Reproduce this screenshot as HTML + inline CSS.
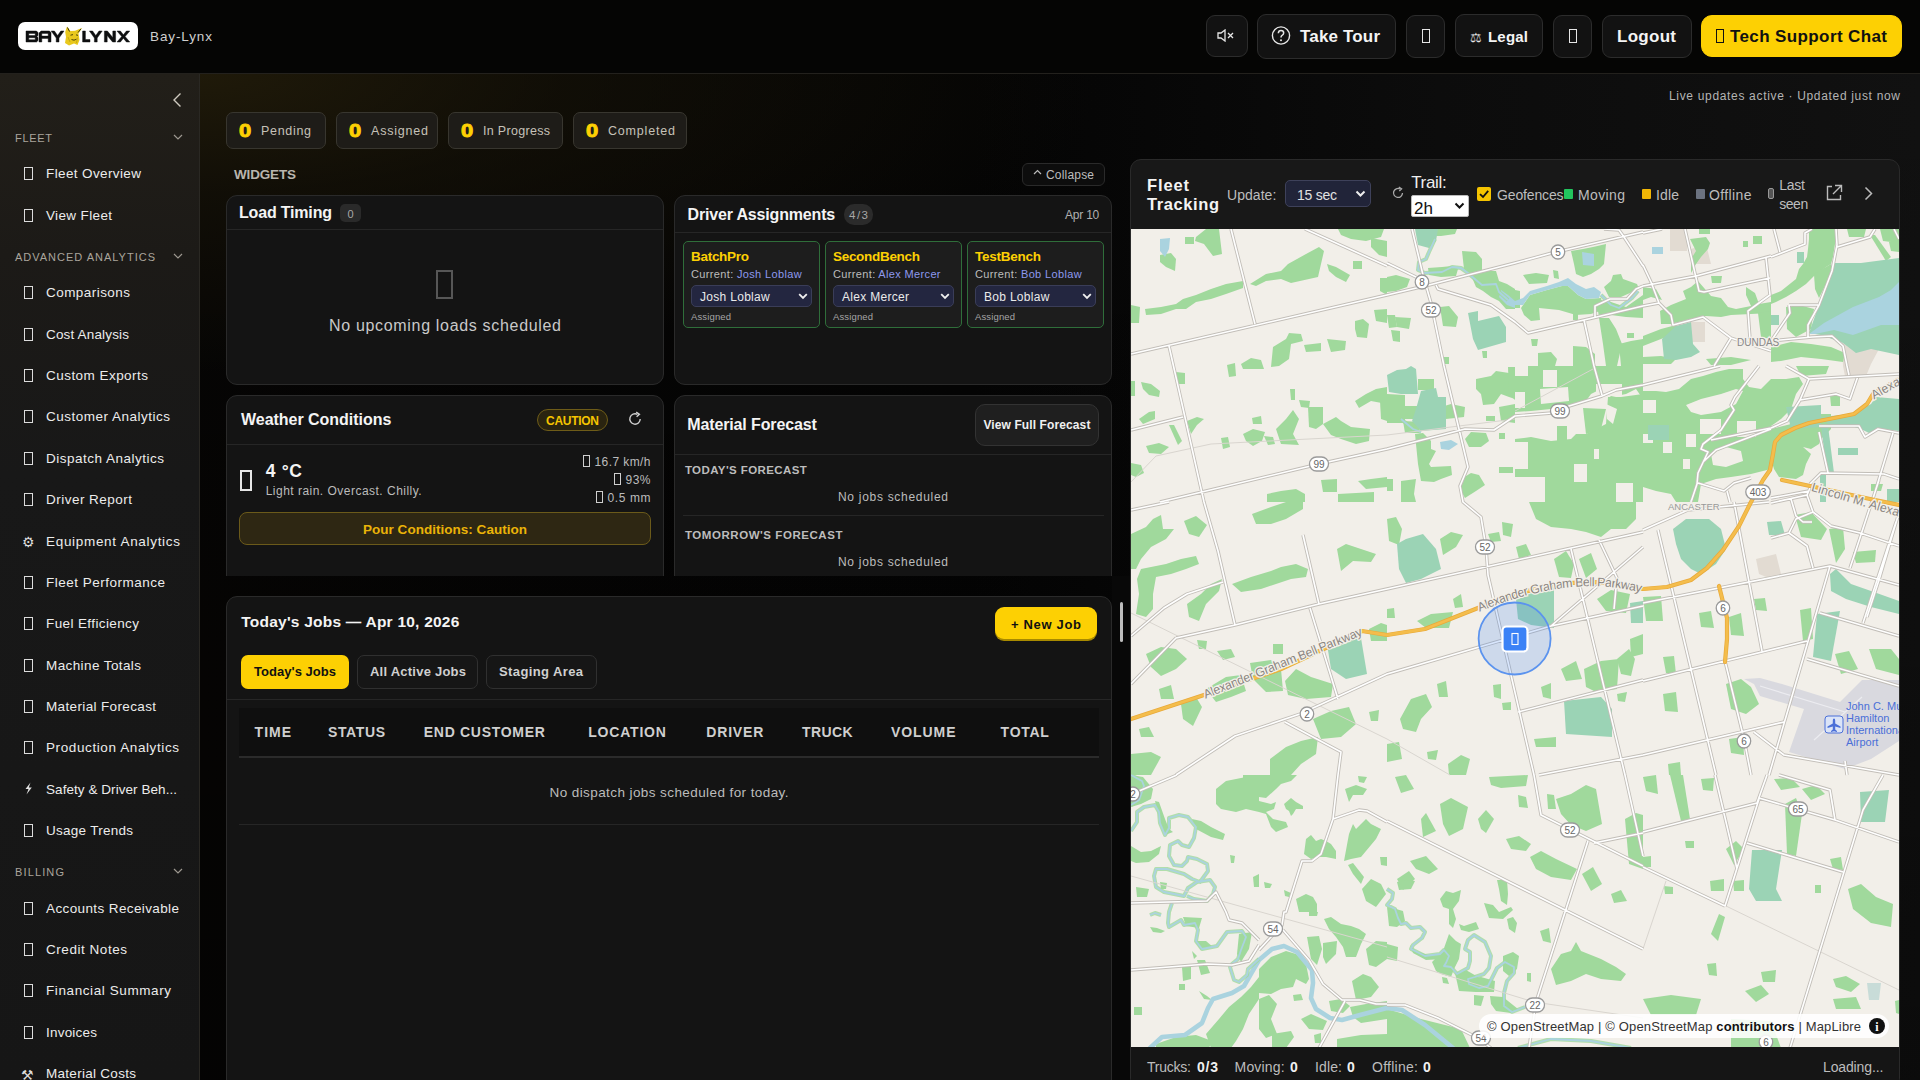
<!DOCTYPE html>
<html><head><meta charset="utf-8"><style>*{box-sizing:border-box;margin:0;padding:0}
html,body{width:1920px;height:1080px;overflow:hidden;background:#0b0b0b;font-family:"Liberation Sans",sans-serif}
.t{position:absolute;white-space:nowrap;line-height:1}
.b{position:absolute}
</style></head><body>
<div class="b" style="left:0px;top:0px;width:1920px;height:73px;background:#050504"></div>
<div class="b" style="left:0px;top:73px;width:1920px;height:1px;background:#23211d"></div>
<div class="b" style="left:18px;top:22px;width:120px;height:28px;background:#fff;border-radius:7px"></div>
<svg class="b" style="left:18px;top:22px" width="120" height="28" viewBox="0 0 120 28">
<g fill="#0e0f10" stroke="#0e0f10" stroke-width="0.45">
<path d="M8 9 H18.5 L20 10.5 V13.6 L18.8 14.6 L20 15.6 V18.6 L18.5 20 H8 Z M10.8 11.4 V13.5 H17.2 V11.4 Z M10.8 15.7 V17.7 H17.2 V15.7 Z" fill-rule="evenodd"/>
<path d="M23 9 H31.5 L33 10.5 V20 H30.2 V16.4 H23.8 V20 H21 V11 Z M23.8 11.4 V14.1 H30.2 V11.4 Z" fill-rule="evenodd"/>
<path d="M33.2 9 H36.4 L39.6 13.6 L42.8 9 H46 L41 16 V20 H38.2 V16 Z"/>
<path d="M64.6 9 H67.4 V17.6 H72 V20 H64.6 Z"/>
<path d="M71.4 9 H74.6 L77.8 13.6 L81 9 H84.2 L79.2 16 V20 H76.4 V16 Z"/>
<path d="M86.4 9 H89.4 L94.8 15.6 V9 H97.6 V20 H94.6 L89.2 13.4 V20 H86.4 Z"/>
<path d="M99 9 H102.4 L105.4 12.8 L108.4 9 H111.8 L107.1 14.5 L111.8 20 H108.4 L105.4 16.2 L102.4 20 H99 L103.7 14.5 Z"/>
</g>
<path d="M49 4.5 L52.5 9 L57 8.8 L64 6 L60.5 11.5 L61.5 18 L59.5 23 L56 21.5 L51 23.5 L47 21 L48 15 L47.2 10 Z" fill="#e9c81c"/>
<path d="M49.5 5.5 L51.5 9.5 M63 6.8 L60 10.5" stroke="#2a2a10" stroke-width="0.9"/>
<path d="M52.5 13.2 L55 12.6 M58 12.8 L60 13.4 M53.5 17.5 Q56 19 58.5 17.2" stroke="#3a3508" stroke-width="0.9" fill="none"/>
<path d="M50 15 L52 20 M59.5 15.5 L58.5 21" stroke="#b89c10" stroke-width="0.7" fill="none"/>
</svg>
<div class="t" style="left:150.00px;top:30.47px;font-size:13.5px;color:#cfcfcf;letter-spacing:0.889px;">Bay-Lynx</div>
<div class="b" style="left:1206px;top:15px;width:42px;height:42px;background:#121212;border:1px solid #2c2c2c;border-radius:9px"></div>
<svg class="b" style="left:1217px;top:29px" width="18" height="13" viewBox="0 0 18 13"><path d="M1 4 H4 L8 1 V12 L4 9 H1 Z" fill="none" stroke="#e6e6e6" stroke-width="1.3"/><path d="M11 4 L16 9 M16 4 L11 9" stroke="#e6e6e6" stroke-width="1.3"/></svg>
<div class="b" style="left:1257px;top:14px;width:139px;height:45px;background:#121212;border:1px solid #2c2c2c;border-radius:9px"></div>
<svg class="b" style="left:1271px;top:26px" width="20" height="20" viewBox="0 0 20 20"><circle cx="10" cy="9.5" r="8.6" fill="none" stroke="#e6e6e6" stroke-width="1.4"/><path d="M7.3 7.3 Q7.5 4.6 10 4.6 Q12.7 4.6 12.7 7.1 Q12.7 8.7 10.8 9.6 Q10 10.1 10 11.6" fill="none" stroke="#e6e6e6" stroke-width="1.5"/><circle cx="10" cy="14.2" r="1" fill="#e6e6e6"/></svg>
<div class="t" style="left:1300.00px;top:27.51px;font-size:17px;color:#f4f4f4;font-weight:bold;letter-spacing:0.160px;">Take Tour</div>
<div class="b" style="left:1406px;top:15px;width:39px;height:43px;background:#121212;border:1px solid #2c2c2c;border-radius:9px"></div>
<div class="b" style="left:1422px;top:29px;width:8px;height:14px;border:1.5px solid #e6e6e6"></div>
<div class="b" style="left:1455px;top:14px;width:88px;height:43px;background:#121212;border:1px solid #2c2c2c;border-radius:9px"></div>
<div class="t" style="left:1470.00px;top:30.90px;font-size:13px;color:#e6e6e6;">&#9878;</div>
<div class="t" style="left:1488.00px;top:29.20px;font-size:15px;color:#f4f4f4;font-weight:bold;letter-spacing:0.205px;">Legal</div>
<div class="b" style="left:1553px;top:15px;width:39px;height:43px;background:#121212;border:1px solid #2c2c2c;border-radius:9px"></div>
<div class="b" style="left:1569px;top:29px;width:8px;height:14px;border:1.5px solid #e6e6e6"></div>
<div class="b" style="left:1602px;top:15px;width:90px;height:43px;background:#121212;border:1px solid #2c2c2c;border-radius:9px"></div>
<div class="t" style="left:1617.00px;top:27.51px;font-size:17px;color:#f4f4f4;font-weight:bold;letter-spacing:0.283px;">Logout</div>
<div class="b" style="left:1701px;top:15px;width:201px;height:42px;background:#fdd003;border:1px solid #fdd003;border-radius:11px"></div>
<div class="b" style="left:1716px;top:29px;width:8px;height:14px;border:1.5px solid #111"></div>
<div class="t" style="left:1730.00px;top:27.51px;font-size:17px;color:#111;font-weight:bold;letter-spacing:0.388px;">Tech Support Chat</div>
<div class="b" style="left:0;top:74px;width:199px;height:1006px;background:linear-gradient(180deg,#221f19 0px,#1c1a17 180px,#181818 400px,#161616 1006px)"></div>
<div class="b" style="left:199px;top:74px;width:1px;height:1006px;background:#2a2823"></div>
<svg class="b" style="left:172px;top:92px" width="10" height="16" viewBox="0 0 10 16"><path d="M8.5 1.5 L2 8 L8.5 14.5" fill="none" stroke="#cfcac0" stroke-width="1.4"/></svg>
<div class="t" style="left:15.00px;top:133.09px;font-size:11px;color:#aaa59c;letter-spacing:0.692px;">FLEET</div>
<svg class="b" style="left:173px;top:134px" width="10" height="6" viewBox="0 0 10 6"><path d="M1 1 L5 5 L9 1" fill="none" stroke="#9d9890" stroke-width="1.2"/></svg>
<div class="b" style="left:24px;top:167px;width:9px;height:13px;border:1.4px solid #dcdcdc"></div>
<div class="t" style="left:46.00px;top:167.27px;font-size:13.5px;color:#ececec;letter-spacing:0.383px;">Fleet Overview</div>
<div class="b" style="left:24px;top:209px;width:9px;height:13px;border:1.4px solid #dcdcdc"></div>
<div class="t" style="left:46.00px;top:209.27px;font-size:13.5px;color:#ececec;letter-spacing:0.358px;">View Fleet</div>
<div class="t" style="left:15.00px;top:252.09px;font-size:11px;color:#aaa59c;letter-spacing:0.996px;">ADVANCED ANALYTICS</div>
<svg class="b" style="left:173px;top:253px" width="10" height="6" viewBox="0 0 10 6"><path d="M1 1 L5 5 L9 1" fill="none" stroke="#9d9890" stroke-width="1.2"/></svg>
<div class="b" style="left:24px;top:286px;width:9px;height:13px;border:1.4px solid #dcdcdc"></div>
<div class="t" style="left:46.00px;top:286.27px;font-size:13.5px;color:#ececec;letter-spacing:0.447px;">Comparisons</div>
<div class="b" style="left:24px;top:328px;width:9px;height:13px;border:1.4px solid #dcdcdc"></div>
<div class="t" style="left:46.00px;top:328.27px;font-size:13.5px;color:#ececec;letter-spacing:0.164px;">Cost Analysis</div>
<div class="b" style="left:24px;top:369px;width:9px;height:13px;border:1.4px solid #dcdcdc"></div>
<div class="t" style="left:46.00px;top:369.27px;font-size:13.5px;color:#ececec;letter-spacing:0.459px;">Custom Exports</div>
<div class="b" style="left:24px;top:410px;width:9px;height:13px;border:1.4px solid #dcdcdc"></div>
<div class="t" style="left:46.00px;top:410.27px;font-size:13.5px;color:#ececec;letter-spacing:0.497px;">Customer Analytics</div>
<div class="b" style="left:24px;top:452px;width:9px;height:13px;border:1.4px solid #dcdcdc"></div>
<div class="t" style="left:46.00px;top:452.27px;font-size:13.5px;color:#ececec;letter-spacing:0.497px;">Dispatch Analytics</div>
<div class="b" style="left:24px;top:493px;width:9px;height:13px;border:1.4px solid #dcdcdc"></div>
<div class="t" style="left:46.00px;top:493.27px;font-size:13.5px;color:#ececec;letter-spacing:0.477px;">Driver Report</div>
<div class="t" style="left:22.00px;top:535.05px;font-size:14px;color:#ddd;">&#9881;</div>
<div class="t" style="left:46.00px;top:535.27px;font-size:13.5px;color:#ececec;letter-spacing:0.691px;">Equipment Analytics</div>
<div class="b" style="left:24px;top:576px;width:9px;height:13px;border:1.4px solid #dcdcdc"></div>
<div class="t" style="left:46.00px;top:576.27px;font-size:13.5px;color:#ececec;letter-spacing:0.497px;">Fleet Performance</div>
<div class="b" style="left:24px;top:617px;width:9px;height:13px;border:1.4px solid #dcdcdc"></div>
<div class="t" style="left:46.00px;top:617.27px;font-size:13.5px;color:#ececec;letter-spacing:0.390px;">Fuel Efficiency</div>
<div class="b" style="left:24px;top:659px;width:9px;height:13px;border:1.4px solid #dcdcdc"></div>
<div class="t" style="left:46.00px;top:659.27px;font-size:13.5px;color:#ececec;letter-spacing:0.400px;">Machine Totals</div>
<div class="b" style="left:24px;top:700px;width:9px;height:13px;border:1.4px solid #dcdcdc"></div>
<div class="t" style="left:46.00px;top:700.27px;font-size:13.5px;color:#ececec;letter-spacing:0.357px;">Material Forecast</div>
<div class="b" style="left:24px;top:741px;width:9px;height:13px;border:1.4px solid #dcdcdc"></div>
<div class="t" style="left:46.00px;top:741.27px;font-size:13.5px;color:#ececec;letter-spacing:0.602px;">Production Analytics</div>
<svg class="b" style="left:24px;top:782px" width="9" height="13" viewBox="0 0 9 13"><path d="M6.5 0.5 L1.5 7 H4.5 L2.5 12.5 L7.8 5.5 H4.8 Z" fill="#e0e0e0"/></svg>
<div class="t" style="left:46.00px;top:783.27px;font-size:13.5px;color:#ececec;letter-spacing:0.057px;">Safety &amp; Driver Beh...</div>
<div class="b" style="left:24px;top:824px;width:9px;height:13px;border:1.4px solid #dcdcdc"></div>
<div class="t" style="left:46.00px;top:824.27px;font-size:13.5px;color:#ececec;letter-spacing:0.268px;">Usage Trends</div>
<div class="t" style="left:15.00px;top:867.09px;font-size:11px;color:#aaa59c;letter-spacing:1.136px;">BILLING</div>
<svg class="b" style="left:173px;top:868px" width="10" height="6" viewBox="0 0 10 6"><path d="M1 1 L5 5 L9 1" fill="none" stroke="#9d9890" stroke-width="1.2"/></svg>
<div class="b" style="left:24px;top:902px;width:9px;height:13px;border:1.4px solid #dcdcdc"></div>
<div class="t" style="left:46.00px;top:902.27px;font-size:13.5px;color:#ececec;letter-spacing:0.385px;">Accounts Receivable</div>
<div class="b" style="left:24px;top:943px;width:9px;height:13px;border:1.4px solid #dcdcdc"></div>
<div class="t" style="left:46.00px;top:943.27px;font-size:13.5px;color:#ececec;letter-spacing:0.543px;">Credit Notes</div>
<div class="b" style="left:24px;top:984px;width:9px;height:13px;border:1.4px solid #dcdcdc"></div>
<div class="t" style="left:46.00px;top:984.27px;font-size:13.5px;color:#ececec;letter-spacing:0.591px;">Financial Summary</div>
<div class="b" style="left:24px;top:1026px;width:9px;height:13px;border:1.4px solid #dcdcdc"></div>
<div class="t" style="left:46.00px;top:1026.27px;font-size:13.5px;color:#ececec;letter-spacing:0.211px;">Invoices</div>
<div class="t" style="left:21.00px;top:1068.05px;font-size:14px;color:#ddd;">&#9874;</div>
<div class="t" style="left:46.00px;top:1067.27px;font-size:13.5px;color:#ececec;letter-spacing:0.286px;">Material Costs</div>
<div class="b" style="left:200px;top:74px;width:1720px;height:1006px;background:radial-gradient(ellipse 900px 300px at 0px 0px,rgba(34,28,10,0.9) 0%,rgba(24,20,8,0.6) 40%,rgba(0,0,0,0) 100%),linear-gradient(180deg,rgba(0,0,0,0) 0%,rgba(0,0,0,0.35) 100%),linear-gradient(90deg,#060504 0%,#040404 45%,#0c0c0c 72%,#111111 100%)"></div>
<div class="t" style="left:1669.00px;top:89.74px;font-size:12px;color:#b4b4b4;letter-spacing:0.672px;">Live updates active · Updated just now</div>
<div class="b" style="left:226px;top:112px;width:100px;height:37px;background:#1e1c18;border:1px solid #38362f;border-radius:7px"></div>
<div class="t" style="left:239.00px;top:121.66px;font-size:18px;color:#fdd003;font-weight:bold;-webkit-text-stroke:0.9px #fdd003;transform:scaleX(1.22);transform-origin:0 0;">0</div>
<div class="t" style="left:261.00px;top:124.82px;font-size:12.5px;color:#c6c2b8;letter-spacing:0.687px;">Pending</div>
<div class="b" style="left:336px;top:112px;width:102px;height:37px;background:#1e1c18;border:1px solid #38362f;border-radius:7px"></div>
<div class="t" style="left:349.00px;top:121.66px;font-size:18px;color:#fdd003;font-weight:bold;-webkit-text-stroke:0.9px #fdd003;transform:scaleX(1.22);transform-origin:0 0;">0</div>
<div class="t" style="left:371.00px;top:124.82px;font-size:12.5px;color:#c6c2b8;letter-spacing:0.797px;">Assigned</div>
<div class="b" style="left:448px;top:112px;width:115px;height:37px;background:#1e1c18;border:1px solid #38362f;border-radius:7px"></div>
<div class="t" style="left:461.00px;top:121.66px;font-size:18px;color:#fdd003;font-weight:bold;-webkit-text-stroke:0.9px #fdd003;transform:scaleX(1.22);transform-origin:0 0;">0</div>
<div class="t" style="left:483.00px;top:124.82px;font-size:12.5px;color:#c6c2b8;letter-spacing:0.308px;">In Progress</div>
<div class="b" style="left:573px;top:112px;width:114px;height:37px;background:#1e1c18;border:1px solid #38362f;border-radius:7px"></div>
<div class="t" style="left:586.00px;top:121.66px;font-size:18px;color:#fdd003;font-weight:bold;-webkit-text-stroke:0.9px #fdd003;transform:scaleX(1.22);transform-origin:0 0;">0</div>
<div class="t" style="left:608.00px;top:124.82px;font-size:12.5px;color:#c6c2b8;letter-spacing:0.819px;">Completed</div>
<div class="t" style="left:234.00px;top:168.17px;font-size:13.5px;color:#b9b5ad;font-weight:bold;letter-spacing:-0.166px;">WIDGETS</div>
<div class="b" style="left:1022px;top:163px;width:83px;height:23px;background:#0d0d0d;border:1px solid #2a2a2a;border-radius:6px"></div>
<svg class="b" style="left:1033px;top:169px" width="9" height="6" viewBox="0 0 9 6"><path d="M1 5 L4.5 1.5 L8 5" fill="none" stroke="#bbb" stroke-width="1.2"/></svg>
<div class="t" style="left:1046.00px;top:169.24px;font-size:12px;color:#bdbdbd;letter-spacing:0.186px;">Collapse</div>
<div class="b" style="left:226px;top:195px;width:438px;height:190px;background:#141414;border:1px solid #2a2a2a;border-radius:11px;"></div>
<div class="b" style="left:227px;top:229px;width:436px;height:1px;background:#262626"></div>
<div class="t" style="left:239.00px;top:205.26px;font-size:16px;color:#f4f4f4;font-weight:bold;letter-spacing:-0.181px;">Load Timing</div>
<div class="b" style="left:340px;top:204px;width:21px;height:18px;background:#2a2a2a;border-radius:5px"></div>
<div class="t" style="left:347.44px;top:208.59px;font-size:11px;color:#a8a8a8;">0</div>
<div class="b" style="left:436px;top:270px;width:17px;height:29px;border:2px solid #575757"></div>
<div class="t" style="left:329.00px;top:317.56px;font-size:16px;color:#c9c9c9;letter-spacing:0.678px;">No upcoming loads scheduled</div>
<div class="b" style="left:674px;top:195px;width:438px;height:190px;background:#141414;border:1px solid #2a2a2a;border-radius:11px;"></div>
<div class="b" style="left:675px;top:232px;width:436px;height:1px;background:#262626"></div>
<div class="t" style="left:687.60px;top:207.06px;font-size:16px;color:#f4f4f4;font-weight:bold;letter-spacing:-0.175px;">Driver Assignments</div>
<div class="b" style="left:844px;top:204px;width:29px;height:21px;background:#2b2b2b;border-radius:10px"></div>
<div class="t" style="left:849.00px;top:210.17px;font-size:11.5px;color:#a8a8a8;letter-spacing:1.507px;">4/3</div>
<div class="t" style="left:1064.90px;top:209.14px;font-size:12px;color:#b0b0b0;letter-spacing:-0.191px;">Apr 10</div>
<div class="b" style="left:683px;top:241px;width:137px;height:87px;background:#1d1d1d;border:1px solid #2f6e3a;border-radius:5px"></div>
<div class="t" style="left:691.00px;top:249.57px;font-size:13.5px;color:#fdd003;font-weight:bold;letter-spacing:-0.288px;">BatchPro</div>
<div class="t" style="left:691px;top:269.09px;font-size:11px;color:#bcbcbc;letter-spacing:0.35px">Current: <span style="color:#8d99ee">Josh Loblaw</span></div>
<div class="b" style="left:691px;top:285px;width:121px;height:22px;background:#232640;border:1px solid #3a3d58;border-radius:5px"></div>
<div class="t" style="left:700.00px;top:291.24px;font-size:12px;color:#eaeaea;letter-spacing:0.3px;">Josh Loblaw</div>
<svg class="b" style="left:798px;top:293px" width="10" height="7" viewBox="0 0 10 7"><path d="M1.2 1.2 L5 5 L8.8 1.2" fill="none" stroke="#f0f0f0" stroke-width="1.8"/></svg>
<div class="t" style="left:691.00px;top:312.06px;font-size:9.5px;color:#a6a6a6;letter-spacing:0.131px;">Assigned</div>
<div class="b" style="left:825px;top:241px;width:137px;height:87px;background:#1d1d1d;border:1px solid #2f6e3a;border-radius:5px"></div>
<div class="t" style="left:833.00px;top:249.57px;font-size:13.5px;color:#fdd003;font-weight:bold;letter-spacing:-0.302px;">SecondBench</div>
<div class="t" style="left:833px;top:269.09px;font-size:11px;color:#bcbcbc;letter-spacing:0.35px">Current: <span style="color:#8d99ee">Alex Mercer</span></div>
<div class="b" style="left:833px;top:285px;width:121px;height:22px;background:#232640;border:1px solid #3a3d58;border-radius:5px"></div>
<div class="t" style="left:842.00px;top:291.24px;font-size:12px;color:#eaeaea;letter-spacing:0.3px;">Alex Mercer</div>
<svg class="b" style="left:940px;top:293px" width="10" height="7" viewBox="0 0 10 7"><path d="M1.2 1.2 L5 5 L8.8 1.2" fill="none" stroke="#f0f0f0" stroke-width="1.8"/></svg>
<div class="t" style="left:833.00px;top:312.06px;font-size:9.5px;color:#a6a6a6;letter-spacing:0.131px;">Assigned</div>
<div class="b" style="left:967px;top:241px;width:137px;height:87px;background:#1d1d1d;border:1px solid #2f6e3a;border-radius:5px"></div>
<div class="t" style="left:975.00px;top:249.57px;font-size:13.5px;color:#fdd003;font-weight:bold;letter-spacing:-0.252px;">TestBench</div>
<div class="t" style="left:975px;top:269.09px;font-size:11px;color:#bcbcbc;letter-spacing:0.35px">Current: <span style="color:#8d99ee">Bob Loblaw</span></div>
<div class="b" style="left:975px;top:285px;width:121px;height:22px;background:#232640;border:1px solid #3a3d58;border-radius:5px"></div>
<div class="t" style="left:984.00px;top:291.24px;font-size:12px;color:#eaeaea;letter-spacing:0.3px;">Bob Loblaw</div>
<svg class="b" style="left:1082px;top:293px" width="10" height="7" viewBox="0 0 10 7"><path d="M1.2 1.2 L5 5 L8.8 1.2" fill="none" stroke="#f0f0f0" stroke-width="1.8"/></svg>
<div class="t" style="left:975.00px;top:312.06px;font-size:9.5px;color:#a6a6a6;letter-spacing:0.131px;">Assigned</div>
<div class="b" style="left:200px;top:380px;width:920px;height:196px;overflow:hidden">
<div class="b" style="left:26px;top:15px;width:438px;height:245px;background:#141414;border:1px solid #2a2a2a;border-radius:11px"></div>
<div class="b" style="left:474px;top:15px;width:438px;height:245px;background:#141414;border:1px solid #2a2a2a;border-radius:11px"></div>
</div>
<div class="b" style="left:227px;top:444px;width:436px;height:1px;background:#262626"></div>
<div class="t" style="left:241.00px;top:411.86px;font-size:16px;color:#f4f4f4;font-weight:bold;letter-spacing:-0.025px;">Weather Conditions</div>
<div class="b" style="left:537px;top:409px;width:71px;height:22px;background:#2a2410;border:1px solid #6e5c18;border-radius:11px"></div>
<div class="t" style="left:546.00px;top:415.24px;font-size:12px;color:#f5c400;font-weight:bold;letter-spacing:-0.277px;">CAUTION</div>
<svg class="b" style="left:627px;top:411px" width="16" height="16" viewBox="0 0 16 16"><path d="M13.2 8 A5.2 5.2 0 1 1 10.4 3.4" fill="none" stroke="#cfcfcf" stroke-width="1.4"/><path d="M9.2 1.2 L12.4 3.3 L9.6 5.8" fill="none" stroke="#cfcfcf" stroke-width="1.4"/></svg>
<div class="b" style="left:240px;top:470px;width:12px;height:21px;border:2px solid #e6e6e6"></div>
<div class="t" style="left:265.70px;top:462.79px;font-size:17.5px;color:#f4f4f4;font-weight:bold;letter-spacing:0.689px;">4 °C</div>
<div class="t" style="left:265.70px;top:485.04px;font-size:12px;color:#bcbcbc;letter-spacing:0.482px;">Light rain. Overcast. Chilly.</div>
<div class="t" style="left:594.50px;top:455.74px;font-size:12px;color:#bcbcbc;letter-spacing:0.413px;">16.7 km/h</div>
<div class="b" style="left:582.5px;top:454.5px;width:7px;height:12px;border:1.2px solid #cfcfcf"></div>
<div class="t" style="left:625.50px;top:473.74px;font-size:12px;color:#bcbcbc;letter-spacing:0.491px;">93%</div>
<div class="b" style="left:613.5px;top:472.5px;width:7px;height:12px;border:1.2px solid #cfcfcf"></div>
<div class="t" style="left:607.50px;top:492.04px;font-size:12px;color:#bcbcbc;letter-spacing:0.598px;">0.5 mm</div>
<div class="b" style="left:595.5px;top:490.8px;width:7px;height:12px;border:1.2px solid #cfcfcf"></div>
<div class="b" style="left:239px;top:512px;width:412px;height:33px;background:#2e2713;border:1px solid #6b5a1a;border-radius:8px"></div>
<div class="t" style="left:363.00px;top:522.97px;font-size:13.5px;color:#eab308;font-weight:bold;letter-spacing:0.023px;">Pour Conditions: Caution</div>
<div class="b" style="left:675px;top:454px;width:436px;height:1px;background:#262626"></div>
<div class="t" style="left:687.20px;top:417.06px;font-size:16px;color:#f4f4f4;font-weight:bold;letter-spacing:-0.120px;">Material Forecast</div>
<div class="b" style="left:975px;top:404px;width:124px;height:42px;background:#1f1f1f;border:1px solid #333;border-radius:10px"></div>
<div class="t" style="left:983.40px;top:419.04px;font-size:12px;color:#f0f0f0;font-weight:bold;letter-spacing:0.109px;">View Full Forecast</div>
<div class="t" style="left:684.90px;top:465.47px;font-size:11.5px;color:#bdbdbd;font-weight:bold;letter-spacing:0.411px;">TODAY&#x27;S FORECAST</div>
<div class="t" style="left:838.00px;top:491.44px;font-size:12px;color:#bcbcbc;letter-spacing:0.704px;">No jobs scheduled</div>
<div class="b" style="left:683px;top:515px;width:421px;height:1px;background:#262626"></div>
<div class="t" style="left:684.90px;top:530.47px;font-size:11.5px;color:#bdbdbd;font-weight:bold;letter-spacing:0.558px;">TOMORROW&#x27;S FORECAST</div>
<div class="t" style="left:838.00px;top:556.34px;font-size:12px;color:#bcbcbc;letter-spacing:0.704px;">No jobs scheduled</div>
<div class="b" style="left:1112px;top:576px;width:19px;height:504px;background:#080808"></div>
<div class="b" style="left:1120px;top:602px;width:2.5px;height:40px;background:#bdbdbd;border-radius:2px"></div>
<div class="b" style="left:226px;top:596px;width:886px;height:504px;background:#141414;border:1px solid #2a2a2a;border-radius:11px;"></div>
<div class="t" style="left:241.30px;top:614.48px;font-size:15.5px;color:#f4f4f4;font-weight:bold;letter-spacing:0.225px;">Today&#x27;s Jobs — Apr 10, 2026</div>
<div class="b" style="left:995px;top:607px;width:102px;height:32px;background:#fdd003;border-radius:9px;box-shadow:0 2px 0 #a88a00"></div>
<div class="t" style="left:1011.00px;top:617.90px;font-size:13px;color:#111;font-weight:bold;letter-spacing:0.668px;">+ New Job</div>
<div class="b" style="left:241px;top:655px;width:108px;height:34px;background:#fdd003;border-radius:7px"></div>
<div class="t" style="left:254.00px;top:664.50px;font-size:13px;color:#111;font-weight:bold;letter-spacing:0.037px;">Today&#x27;s Jobs</div>
<div class="b" style="left:357px;top:655px;width:121px;height:34px;background:#161616;border:1px solid #303030;border-radius:7px"></div>
<div class="t" style="left:370.00px;top:664.50px;font-size:13px;color:#d0d0d0;font-weight:bold;letter-spacing:0.235px;">All Active Jobs</div>
<div class="b" style="left:486px;top:655px;width:111px;height:34px;background:#161616;border:1px solid #303030;border-radius:7px"></div>
<div class="t" style="left:499.00px;top:664.50px;font-size:13px;color:#d0d0d0;font-weight:bold;letter-spacing:0.391px;">Staging Area</div>
<div class="b" style="left:227px;top:699px;width:884px;height:1px;background:#262626"></div>
<div class="b" style="left:239px;top:708px;width:860px;height:48px;background:#0f0f0f"></div>
<div class="b" style="left:239px;top:756px;width:860px;height:2px;background:#2b2b2b"></div>
<div class="t" style="left:254.60px;top:725.05px;font-size:14px;color:#cfcfcf;font-weight:bold;letter-spacing:1.019px;">TIME</div>
<div class="t" style="left:328.00px;top:725.05px;font-size:14px;color:#cfcfcf;font-weight:bold;letter-spacing:0.615px;">STATUS</div>
<div class="t" style="left:423.80px;top:725.05px;font-size:14px;color:#cfcfcf;font-weight:bold;letter-spacing:0.699px;">END CUSTOMER</div>
<div class="t" style="left:588.20px;top:725.05px;font-size:14px;color:#cfcfcf;font-weight:bold;letter-spacing:0.805px;">LOCATION</div>
<div class="t" style="left:706.30px;top:725.05px;font-size:14px;color:#cfcfcf;font-weight:bold;letter-spacing:0.820px;">DRIVER</div>
<div class="t" style="left:802.00px;top:725.05px;font-size:14px;color:#cfcfcf;font-weight:bold;letter-spacing:0.426px;">TRUCK</div>
<div class="t" style="left:891.00px;top:725.05px;font-size:14px;color:#cfcfcf;font-weight:bold;letter-spacing:0.922px;">VOLUME</div>
<div class="t" style="left:1000.60px;top:725.05px;font-size:14px;color:#cfcfcf;font-weight:bold;letter-spacing:0.734px;">TOTAL</div>
<div class="t" style="left:549.50px;top:785.67px;font-size:13.5px;color:#bcbcbc;letter-spacing:0.413px;">No dispatch jobs scheduled for today.</div>
<div class="b" style="left:239px;top:824px;width:860px;height:1px;background:#262626"></div>
<div class="b" style="left:1130px;top:159px;width:770px;height:930px;background:#181818;border:1px solid #2a2a2a;border-radius:11px;overflow:hidden"></div>
<div class="t" style="left:1147.00px;top:176.93px;font-size:16.5px;color:#f4f4f4;font-weight:bold;letter-spacing:0.872px;">Fleet</div>
<div class="t" style="left:1147.00px;top:195.93px;font-size:16.5px;color:#f4f4f4;font-weight:bold;letter-spacing:0.591px;">Tracking</div>
<div class="t" style="left:1227.00px;top:187.55px;font-size:14px;color:#bdbdbd;letter-spacing:0.044px;">Update:</div>
<div class="b" style="left:1285px;top:180px;width:86px;height:27px;background:#212439;border:1px solid #3e415a;border-radius:5px"></div>
<div class="t" style="left:1297.00px;top:187.55px;font-size:14px;color:#e2e2e2;letter-spacing:-0.250px;">15 sec</div>
<svg class="b" style="left:1355px;top:190px" width="11" height="8" viewBox="0 0 11 8"><path d="M1.5 1.5 L5.5 5.5 L9.5 1.5" fill="none" stroke="#eee" stroke-width="2"/></svg>
<svg class="b" style="left:1391px;top:186px" width="14" height="14" viewBox="0 0 14 14"><path d="M11.5 7 A4.5 4.5 0 1 1 9 2.9" fill="none" stroke="#aaa" stroke-width="1.3"/><path d="M7.8 1 L10.6 2.9 L8.3 5" fill="none" stroke="#aaa" stroke-width="1.3"/></svg>
<div class="t" style="left:1411.20px;top:174.21px;font-size:17px;color:#efefef;letter-spacing:-0.330px;">Trail:</div>
<div class="b" style="left:1411px;top:195px;width:58px;height:22px;background:#fff;border:1px solid #bbb;border-radius:2px"></div>
<div class="t" style="left:1414.00px;top:200.01px;font-size:17px;color:#111;">2h</div>
<svg class="b" style="left:1454px;top:202px" width="11" height="8" viewBox="0 0 11 8"><path d="M1.5 1.5 L5.5 5.5 L9.5 1.5" fill="none" stroke="#111" stroke-width="2"/></svg>
<div class="b" style="left:1477px;top:187px;width:14px;height:14px;background:#f5c400;border-radius:2px"></div>
<svg class="b" style="left:1477px;top:187px" width="14" height="14" viewBox="0 0 14 14"><path d="M3 7.2 L6 10 L11.2 3.8" fill="none" stroke="#111" stroke-width="1.8"/></svg>
<div class="t" style="left:1497.00px;top:187.55px;font-size:14px;color:#bdbdbd;letter-spacing:-0.139px;">Geofences</div>
<div class="b" style="left:1564px;top:189px;width:9px;height:10px;background:#22c55e;border-radius:1px"></div>
<div class="t" style="left:1578.00px;top:187.55px;font-size:14px;color:#bdbdbd;letter-spacing:0.373px;">Moving</div>
<div class="b" style="left:1642px;top:189px;width:9px;height:10px;background:#f2b705;border-radius:1px"></div>
<div class="t" style="left:1656.00px;top:187.55px;font-size:14px;color:#bdbdbd;letter-spacing:0.142px;">Idle</div>
<div class="b" style="left:1696px;top:189px;width:9px;height:10px;background:#6b7280;border-radius:1px"></div>
<div class="t" style="left:1709.00px;top:187.55px;font-size:14px;color:#bdbdbd;letter-spacing:0.382px;">Offline</div>
<div class="b" style="left:1768px;top:188px;width:6px;height:11px;border:1.2px solid #999;border-radius:2px;background:#555"></div>
<div class="t" style="left:1779.20px;top:177.85px;font-size:14px;color:#bdbdbd;letter-spacing:-0.221px;">Last</div>
<div class="t" style="left:1779.20px;top:197.05px;font-size:14px;color:#bdbdbd;letter-spacing:-0.453px;">seen</div>
<svg class="b" style="left:1825px;top:184px" width="18" height="18" viewBox="0 0 18 18"><path d="M7 2.5 H2.5 V15.5 H15.5 V11" fill="none" stroke="#bbb" stroke-width="1.4"/><path d="M10 1.5 H16.5 V8 M16.5 1.5 L8 10" fill="none" stroke="#bbb" stroke-width="1.4"/></svg>
<svg class="b" style="left:1864px;top:186px" width="9" height="15" viewBox="0 0 9 15"><path d="M1.5 1.5 L7.5 7.5 L1.5 13.5" fill="none" stroke="#bbb" stroke-width="1.5"/></svg>
<div class="b" style="left:1131px;top:229px;width:768px;height:818px;overflow:hidden;background:#f2efe9"><svg width="768" height="818" viewBox="0 0 768 818" style="position:absolute;left:0;top:0">
<rect width="768" height="818" fill="#f2efe9"/>
<polygon points="711,114 730,112 748,99 755,105 748,120 740,135 735,147 714,147 712,137" fill="#e2dbd2"/>
<polygon points="539,0 556,0 556,22 539,22" fill="#e2dbd2"/>
<polygon points="560,93 574,93 574,113 560,113" fill="#e2dbd2"/>
<polygon points="625,330 645,325 650,345 640,350 628,345" fill="#e2dbd2"/>
<polygon points="560,35 580,35 575,15 560,20" fill="#e2dbd2"/>
<polygon points="613,450 629,449 651,455 709,473 731,451 768,451 768,512 740,530 714,540 658,523 673,480 629,467 623,455" fill="#d9d9df"/>
<path d="M629,457 L714,483 M683,511 L731,468" stroke="#ececf0" stroke-width="1.2"/>
<polygon points="65,8 75,0 88,0 91,25 82,27 73,15 64,12" fill="#a0d99c"/>
<polygon points="54,8 63,8 63,15 54,15" fill="#a0d99c"/>
<polygon points="29,26 40,24 45,30 44,42 35,38 29,33" fill="#a0d99c"/>
<polygon points="119,55 135,45 150,42 157,35 175,25 188,18 193,22 190,35 187,48 160,54 150,50 135,52 125,57" fill="#a0d99c"/>
<polygon points="14,80 30,78 45,75 52,70 65,66 80,60 95,55 112,52 112,59 95,65 80,70 65,73 55,80 45,80 30,85 15,86" fill="#a0d99c"/>
<polygon points="0,76 9,78 8,94 0,94" fill="#a0d99c"/>
<polygon points="196,35 205,38 219,46 215,53 205,48 198,42" fill="#a0d99c"/>
<polygon points="222,32 231,32 231,40 222,40" fill="#a0d99c"/>
<polygon points="240,9 256,12 256,28 248,26 240,18" fill="#a0d99c"/>
<polygon points="207,0 253,0 250,8 235,12 220,10 210,6" fill="#a0d99c"/>
<polygon points="249,49 256,49 256,66 249,62" fill="#a0d99c"/>
<polygon points="243,81 256,80 256,94 245,92" fill="#a0d99c"/>
<polygon points="224,92 232,90 238,95 236,109 226,108 224,100" fill="#a0d99c"/>
<polygon points="140,138 142,118 155,110 158,104 170,105 172,112 160,115 158,130 148,137" fill="#a0d99c"/>
<polygon points="173,116 190,114 190,122 175,123" fill="#a0d99c"/>
<polygon points="196,110 215,112 214,121 200,123" fill="#a0d99c"/>
<polygon points="110,135 120,129 130,131 133,140 112,140" fill="#a0d99c"/>
<polygon points="96,136 104,134 105,147 98,148" fill="#a0d99c"/>
<polygon points="45,143 54,144 54,155 47,155" fill="#a0d99c"/>
<polygon points="10,153 20,155 29,162 28,168 18,166 12,160" fill="#a0d99c"/>
<polygon points="0,152 4,152 4,167 0,167" fill="#a0d99c"/>
<polygon points="8,190 18,183 24,182 24,190 12,195" fill="#a0d99c"/>
<polygon points="56,192 66,188 73,190 66,196 60,205" fill="#a0d99c"/>
<polygon points="38,196 43,196 51,212 47,216" fill="#a0d99c"/>
<polygon points="15,217 28,214 38,218 30,225 18,224" fill="#a0d99c"/>
<polygon points="0,234 10,236 13,244 5,248 0,246" fill="#a0d99c"/>
<polygon points="90,209 97,208 99,218 92,220" fill="#a0d99c"/>
<polygon points="112,205 122,200 134,203 131,212 122,217 115,212" fill="#a0d99c"/>
<polygon points="133,207 142,208 144,215 137,216" fill="#a0d99c"/>
<polygon points="145,200 155,190 162,181 168,190 162,205 168,216 150,215" fill="#a0d99c"/>
<polygon points="168,171 179,172 178,179 170,178" fill="#a0d99c"/>
<polygon points="177,178 192,178 192,195 185,200 178,198" fill="#a0d99c"/>
<polygon points="192,195 205,188 210,192 220,198 239,200 238,212 225,215 210,210 200,206" fill="#a0d99c"/>
<polygon points="224,172 235,165 245,160 256,158 256,175 240,172 228,179" fill="#a0d99c"/>
<polygon points="249,172 256,172 256,192 250,190" fill="#a0d99c"/>
<polygon points="190,251 206,250 206,263 192,263" fill="#a0d99c"/>
<polygon points="227,252 240,250 256,248 256,258 235,260" fill="#a0d99c"/>
<polygon points="207,265 225,264 243,263 243,273 207,273" fill="#a0d99c"/>
<polygon points="136,265 150,262 165,260 174,265 174,273 136,273" fill="#a0d99c"/>
<polygon points="159,160 164,160 164,171 160,171" fill="#a0d99c"/>
<polygon points="121,189 130,187 131,195 122,195" fill="#a0d99c"/>
<polygon points="297,0 326,0 324,5 310,7 297,7" fill="#a0d99c"/>
<polygon points="297,39 311,38 321,37 327,40 325,47 310,48 298,46" fill="#a0d99c"/>
<polygon points="331,22 345,23 351,30 351,48 340,46 333,40" fill="#a0d99c"/>
<polygon points="340,46 352,42 365,42 368,52 376,55 384,60 384,80 375,80 368,72 360,68 352,62 345,58" fill="#a0d99c"/>
<polygon points="256,48 265,46 279,50 276,58 265,62 256,63" fill="#a0d99c"/>
<polygon points="309,78 318,77 327,88 325,98 312,97" fill="#a0d99c"/>
<polygon points="256,86 264,86 266,98 258,99" fill="#a0d99c"/>
<polygon points="264,88 280,89 278,100 266,98" fill="#a0d99c"/>
<polygon points="260,101 269,102 269,113 262,112" fill="#a0d99c"/>
<polygon points="351,122 356,122 356,129 352,129" fill="#a0d99c"/>
<polygon points="313,128 318,128 318,135 313,135" fill="#a0d99c"/>
<polygon points="390,79 399,66 416,61 431,57 437,57 447,66 455,70 470,69 472,81 460,85 445,86 428,81 408,79 409,91 400,92 393,86" fill="#a0d99c"/>
<polygon points="440,22 452,20 462,18 475,15 473,35 468,40 460,45 452,48 445,45 443,35" fill="#a0d99c"/>
<polygon points="392,46 405,44 418,46 416,54 398,55" fill="#a0d99c"/>
<polygon points="422,41 427,42 428,50 423,49" fill="#a0d99c"/>
<polygon points="384,61 389,62 389,79 384,79" fill="#a0d99c"/>
<polygon points="473,58 480,52 482,46 490,45 492,50 506,55 508,60 490,68 478,68" fill="#a0d99c"/>
<polygon points="465,70 480,73 495,78 512,66 512,89 495,88 480,86 468,88" fill="#a0d99c"/>
<polygon points="468,89 478,89 485,100 491,115 486,137 475,137 472,115" fill="#a0d99c"/>
<polygon points="442,84 447,84 447,91 442,91" fill="#a0d99c"/>
<polygon points="400,110 407,110 406,117 401,117" fill="#a0d99c"/>
<polygon points="407,124 420,123 426,130 424,137 407,137" fill="#a0d99c"/>
<polygon points="442,117 455,118 464,125 464,137 442,137" fill="#a0d99c"/>
<polygon points="488,115 500,112 512,110 512,137 490,137" fill="#a0d99c"/>
<polygon points="496,104 503,104 503,109 496,109" fill="#a0d99c"/>
<polygon points="287,150 303,150 303,161 287,161" fill="#a0d99c"/>
<polygon points="256,165 274,166 274,194 256,194" fill="#a0d99c"/>
<polygon points="272,177 287,177 287,190 272,190" fill="#a0d99c"/>
<polygon points="272,192 290,193 288,204 274,204" fill="#a0d99c"/>
<polygon points="310,178 320,175 334,178 333,188 315,190" fill="#a0d99c"/>
<polygon points="345,150 360,147 365,142 378,144 384,148 384,170 378,168 370,165 363,175 352,176 350,165 345,160" fill="#a0d99c"/>
<polygon points="377,138 384,138 384,171 378,165" fill="#a0d99c"/>
<polygon points="368,178 384,175 384,194 370,192" fill="#a0d99c"/>
<polygon points="355,187 364,187 364,192 355,192" fill="#a0d99c"/>
<polygon points="334,210 340,203 355,204 358,212 350,218 338,218" fill="#a0d99c"/>
<polygon points="284,205 292,204 300,212 300,220 305,222 298,235 300,238 320,237 321,246 310,250 303,253 290,252 287,235 285,215" fill="#a0d99c"/>
<polygon points="330,250 340,244 348,246 354,256 345,262 334,269 330,262" fill="#a0d99c"/>
<polygon points="368,238 382,238 382,244 368,244" fill="#a0d99c"/>
<polygon points="368,204 374,204 374,210 368,210" fill="#a0d99c"/>
<polygon points="256,250 262,250 262,262 256,262" fill="#a0d99c"/>
<polygon points="270,252 285,250 283,265 285,273 270,273" fill="#a0d99c"/>
<polygon points="384,137 512,137 512,170 505,160 495,165 480,168 470,160 460,165 455,172 440,178 420,180 400,182 384,183" fill="#a0d99c"/>
<polygon points="384,210 400,208 420,212 440,210 445,205 455,205 465,200 475,195 477,168 490,168 512,165 512,273 384,273" fill="#a0d99c"/>
<polygon points="426,197 436,197 436,215 426,215" fill="#a0d99c"/>
<polygon points="452,179 475,180 470,200 455,205" fill="#a0d99c"/>
<polygon points="559,10 575,8 579,14 577,20 570,28 565,35 560,44 560,30 565,22" fill="#a0d99c"/>
<polygon points="568,0 579,0 579,5 568,5" fill="#a0d99c"/>
<polygon points="612,12 617,12 617,18 612,18" fill="#a0d99c"/>
<polygon points="622,7 631,7 631,15 622,15" fill="#a0d99c"/>
<polygon points="580,47 591,47 590,54 581,54" fill="#a0d99c"/>
<polygon points="529,82 540,76 555,70 552,62 560,58 567,52 580,67 590,69 597,78 605,80 620,77 615,66 615,58 624,64 628,75 640,73 640,84 620,85 600,86 590,88 575,87 560,90 548,93 540,95 530,95" fill="#a0d99c"/>
<polygon points="512,107 530,100 545,96 545,104 530,110 512,117" fill="#a0d99c"/>
<polygon points="512,58 525,60 531,71 520,68 512,71" fill="#a0d99c"/>
<polygon points="627,84 640,82 640,110 630,108" fill="#a0d99c"/>
<polygon points="512,128 530,127 545,130 540,135 512,135" fill="#a0d99c"/>
<polygon points="575,130 600,128 620,131 600,136 580,136" fill="#a0d99c"/>
<polygon points="640,66 650,62 655,58 665,50 668,40 672,35 676,28 677,20 678,10 678,0 705,0 704,15 702,28 700,35 695,38 690,42 683,47 675,55 665,62 655,68 645,73 640,75" fill="#a0d99c"/>
<polygon points="683,45 700,35 700,45 695,55 690,65 688,69 684,60" fill="#a0d99c"/>
<polygon points="739,6 744,6 760,28 755,32" fill="#a0d99c"/>
<polygon points="716,0 735,0 733,8 718,8" fill="#a0d99c"/>
<polygon points="749,0 768,0 768,14 752,12" fill="#a0d99c"/>
<polygon points="758,13 768,11 768,23 760,22" fill="#a0d99c"/>
<polygon points="640,118 660,113 680,115 700,118 714,124 712,133 690,130 670,128 650,132 640,133" fill="#a0d99c"/>
<polygon points="655,78 668,76 683,80 680,100 665,108 656,100" fill="#a0d99c"/>
<polygon points="512,162 525,162 535,163 548,160 560,150 572,147 585,143 598,140 612,140 625,137 640,137 640,240 620,245 600,248 585,250 570,255 567,273 545,273 540,265 525,262 512,258" fill="#a0d99c"/>
<polygon points="640,150 655,150 668,148 672,155 665,165 660,180 650,190 640,197" fill="#a0d99c"/>
<polygon points="665,137 698,137 695,145 670,147" fill="#a0d99c"/>
<polygon points="640,200 660,195 680,190 690,185 700,185 700,200 690,210 688,215 680,220 672,218 680,225 675,235 672,246 665,250 648,248 643,240 640,230" fill="#a0d99c"/>
<polygon points="699,166 709,166 709,177 700,177" fill="#a0d99c"/>
<polygon points="740,255 752,255 750,262 740,262" fill="#a0d99c"/>
<polygon points="0,305 15,298 22,290 30,286 32,300 43,300 35,310 20,318 10,330 5,340 0,340" fill="#a0d99c"/>
<polygon points="10,340 20,338 35,335 50,330 65,327 68,335 55,340 40,345 25,348 22,365 22,380 15,388 5,385 8,365 6,350" fill="#a0d99c"/>
<polygon points="53,292 65,287 76,296 68,308 58,305" fill="#a0d99c"/>
<polygon points="101,355 120,348 140,342 150,338 165,335 177,340 175,348 160,350 145,355 130,360 110,363" fill="#a0d99c"/>
<polygon points="121,285 140,278 155,273 172,273 172,280 155,290 140,295 125,295" fill="#a0d99c"/>
<polygon points="56,375 70,365 80,355 91,350 88,362 75,375 68,392 58,388" fill="#a0d99c"/>
<polygon points="206,320 215,315 245,325 240,333 222,332 210,342" fill="#a0d99c"/>
<polygon points="15,425 30,418 45,420 56,430 45,440 30,447 20,438" fill="#a0d99c"/>
<polygon points="66,411 76,412 75,420 68,420" fill="#a0d99c"/>
<polygon points="86,422 100,420 104,428 92,431" fill="#a0d99c"/>
<polygon points="28,460 40,456 43,470 30,470" fill="#a0d99c"/>
<polygon points="119,434 140,431 150,440 152,462 135,463 122,450" fill="#a0d99c"/>
<polygon points="75,460 95,448 110,446 115,462 100,468 85,473" fill="#a0d99c"/>
<polygon points="154,452 165,440 180,448 202,455 200,468 175,470 157,466" fill="#a0d99c"/>
<polygon points="142,415 152,415 152,425 142,425" fill="#a0d99c"/>
<polygon points="50,475 65,468 71,478 62,497 52,490" fill="#a0d99c"/>
<polygon points="8,500 18,498 23,508 10,508" fill="#a0d99c"/>
<polygon points="0,525 20,523 30,528 20,546 0,546" fill="#a0d99c"/>
<polygon points="139,530 155,518 170,512 187,508 185,525 170,535 160,546 139,546" fill="#a0d99c"/>
<polygon points="182,490 200,482 218,478 225,495 210,508 190,510" fill="#a0d99c"/>
<polygon points="238,483 248,481 247,492 240,492" fill="#a0d99c"/>
<polygon points="238,400 250,394 256,396 256,412 240,412" fill="#a0d99c"/>
<polygon points="398,273 505,273 505,290 495,300 480,300 470,308 455,303 440,300 420,298 405,290" fill="#a0d99c"/>
<polygon points="256,290 265,288 271,300 268,316 258,312" fill="#a0d99c"/>
<polygon points="309,310 320,303 332,306 325,318 312,326" fill="#a0d99c"/>
<polygon points="371,293 382,295 380,308 372,306" fill="#a0d99c"/>
<polygon points="357,305 368,303 370,312 360,313" fill="#a0d99c"/>
<polygon points="385,318 395,315 400,326 388,330" fill="#a0d99c"/>
<polygon points="423,330 435,322 443,335 440,349 428,348" fill="#a0d99c"/>
<polygon points="448,330 460,324 466,340 455,349" fill="#a0d99c"/>
<polygon points="466,370 480,361 499,365 495,384 475,382" fill="#a0d99c"/>
<polygon points="286,392 300,385 322,383 318,399 295,399" fill="#a0d99c"/>
<polygon points="322,370 330,365 332,378 324,379" fill="#a0d99c"/>
<polygon points="256,380 263,379 264,389 256,389" fill="#a0d99c"/>
<polygon points="430,440 445,432 451,450 435,452" fill="#a0d99c"/>
<polygon points="453,440 470,432 488,430 486,460 465,463 455,458" fill="#a0d99c"/>
<polygon points="486,430 498,420 504,430 500,447 490,445" fill="#a0d99c"/>
<polygon points="269,490 280,470 295,465 301,478 290,490 285,503 272,500" fill="#a0d99c"/>
<polygon points="306,455 315,452 317,468 308,468" fill="#a0d99c"/>
<polygon points="362,456 370,455 370,470 363,468" fill="#a0d99c"/>
<polygon points="371,474 380,473 380,481 372,481" fill="#a0d99c"/>
<polygon points="410,458 420,454 420,470 412,468" fill="#a0d99c"/>
<polygon points="403,510 425,508 425,518 405,518" fill="#a0d99c"/>
<polygon points="317,535 330,526 339,530 335,546 318,546" fill="#a0d99c"/>
<polygon points="256,515 268,513 271,530 256,533" fill="#a0d99c"/>
<polygon points="296,523 307,521 305,531 297,530" fill="#a0d99c"/>
<polygon points="486,465 496,463 494,473 487,472" fill="#a0d99c"/>
<polygon points="499,410 512,405 512,425 500,428" fill="#a0d99c"/>
<polygon points="512,368 530,367 532,392 515,392" fill="#a0d99c"/>
<polygon points="568,384 580,382 583,399 570,398" fill="#a0d99c"/>
<polygon points="598,388 610,384 613,407 600,406" fill="#a0d99c"/>
<polygon points="623,370 634,369 636,382 625,381" fill="#a0d99c"/>
<polygon points="595,455 610,450 620,458 628,475 615,485 600,480" fill="#a0d99c"/>
<polygon points="532,465 545,463 547,483 534,482" fill="#a0d99c"/>
<polygon points="532,428 543,427 545,445 535,444" fill="#a0d99c"/>
<polygon points="598,510 612,508 613,526 600,524" fill="#a0d99c"/>
<polygon points="537,535 549,533 550,546 538,546" fill="#a0d99c"/>
<polygon points="664,286 680,283 696,300 690,311 670,308" fill="#a0d99c"/>
<polygon points="698,300 712,298 714,320 705,334" fill="#a0d99c"/>
<polygon points="669,381 680,379 682,410 672,412" fill="#a0d99c"/>
<polygon points="704,425 718,422 727,440 710,445" fill="#a0d99c"/>
<polygon points="722,323 745,321 744,333 725,334" fill="#a0d99c"/>
<polygon points="738,420 760,420 768,430 768,446 745,440" fill="#a0d99c"/>
<polygon points="85,560 95,552 105,550 115,548 128,546 128,583 115,580 105,583 90,580 85,575" fill="#a0d99c"/>
<polygon points="112,546 128,546 128,552 112,552" fill="#a0d99c"/>
<polygon points="24,572 28,573 34,590 38,600 42,603 34,606 29,594" fill="#a0d99c"/>
<polygon points="61,590 70,592 80,598 94,605 92,611 80,608 65,600" fill="#a0d99c"/>
<polygon points="0,617 10,623 20,622 30,617 28,625 18,633 5,634 0,632" fill="#a0d99c"/>
<polygon points="5,658 18,660 16,668 6,668" fill="#a0d99c"/>
<polygon points="29,653 36,654 35,660 30,660" fill="#a0d99c"/>
<polygon points="99,626 104,627 103,634 100,634" fill="#a0d99c"/>
<polygon points="122,648 128,645 128,658 123,658" fill="#a0d99c"/>
<polygon points="0,546 12,548 22,560 20,570 10,575 0,578" fill="#a0d99c"/>
<polygon points="128,546 166,546 160,552 150,555 145,560 135,569 128,568" fill="#a0d99c"/>
<polygon points="128,572 140,575 145,573 143,580 135,583 142,590 155,593 157,598 145,603 140,598 135,585 128,583" fill="#a0d99c"/>
<polygon points="153,575 160,569 165,573 172,577 172,580 165,580 162,585 160,587 158,582 155,580" fill="#a0d99c"/>
<polygon points="214,560 225,556 236,560 232,566 222,566 218,573" fill="#a0d99c"/>
<polygon points="227,547 236,548 233,554 228,553" fill="#a0d99c"/>
<polygon points="173,625 175,610 180,606 185,612 190,610 195,612 200,615 205,622 205,630 195,628 188,628 180,630" fill="#a0d99c"/>
<polygon points="213,632 218,605 222,595 225,600 230,595 235,590 240,595 250,600 245,610 235,622 230,628 220,630" fill="#a0d99c"/>
<polygon points="249,628 256,628 256,637 250,636" fill="#a0d99c"/>
<polygon points="217,636 222,634 233,648 230,655 222,645" fill="#a0d99c"/>
<polygon points="231,660 240,650 250,655 255,665 245,678 235,672" fill="#a0d99c"/>
<polygon points="133,653 141,655 139,659 134,659" fill="#a0d99c"/>
<polygon points="153,661 160,664 158,668 154,667" fill="#a0d99c"/>
<polygon points="165,670 175,665 182,668 186,675 186,683 168,683" fill="#a0d99c"/>
<polygon points="52,688 71,689 68,699 55,697" fill="#a0d99c"/>
<polygon points="64,712 75,712 82,718 70,721" fill="#a0d99c"/>
<polygon points="108,705 121,703 118,720 110,733 106,725" fill="#a0d99c"/>
<polygon points="19,698 26,699 34,702 30,704 22,703" fill="#a0d99c"/>
<polygon points="61,722 66,727 63,730" fill="#a0d99c"/>
<polygon points="66,731 74,731 79,744 70,746" fill="#a0d99c"/>
<polygon points="51,738 60,738 60,750 52,752" fill="#a0d99c"/>
<polygon points="48,755 54,755 54,761 48,761" fill="#a0d99c"/>
<polygon points="3,778 11,778 11,786 3,786" fill="#a0d99c"/>
<polygon points="68,762 76,767 81,771 73,770" fill="#a0d99c"/>
<polygon points="75,805 88,790 98,778 110,768 120,758 128,748 128,770 118,785 112,800 105,812 100,819 80,819" fill="#a0d99c"/>
<polygon points="25,815 45,808 65,806 81,812 78,819 25,819" fill="#a0d99c"/>
<polygon points="128,740 140,728 155,722 165,725 175,735 178,750 175,755 165,750 162,758 150,760 140,765 128,764" fill="#a0d99c"/>
<polygon points="128,770 138,766 146,775 140,790 146,805 135,809 128,800" fill="#a0d99c"/>
<polygon points="141,805 160,802 163,808 155,819 141,819" fill="#a0d99c"/>
<polygon points="176,708 188,707 191,720 186,736 180,730" fill="#a0d99c"/>
<polygon points="192,714 206,712 205,725 195,735 192,728" fill="#a0d99c"/>
<polygon points="193,690 200,688 210,695 220,697 228,700 235,705 230,715 225,728 215,728 212,718 205,708 198,700" fill="#a0d99c"/>
<polygon points="235,720 245,712 256,713 256,730 245,738 238,736" fill="#a0d99c"/>
<polygon points="221,752 232,745 240,748 248,758 240,768 225,771" fill="#a0d99c"/>
<polygon points="198,772 210,770 219,777 212,784 200,782" fill="#a0d99c"/>
<polygon points="219,778 235,775 256,772 256,790 230,794 222,788" fill="#a0d99c"/>
<polygon points="162,766 170,765 172,771 163,772" fill="#a0d99c"/>
<polygon points="170,790 180,785 196,792 192,801 178,800" fill="#a0d99c"/>
<polygon points="206,810 230,806 256,805 256,819 206,819" fill="#a0d99c"/>
<polygon points="183,806 190,804 190,814 184,814" fill="#a0d99c"/>
<polygon points="178,683 187,683 186,687 178,687" fill="#a0d99c"/>
<polygon points="264,548 275,546 283,560 270,564" fill="#a0d99c"/>
<polygon points="309,575 320,569 337,578 332,600 318,607 312,595" fill="#a0d99c"/>
<polygon points="290,590 295,584 305,602 292,608" fill="#a0d99c"/>
<polygon points="347,590 355,581 363,590 355,604 350,600" fill="#a0d99c"/>
<polygon points="358,548 397,546 395,557 370,559 360,556" fill="#a0d99c"/>
<polygon points="387,566 395,568 397,579 388,578" fill="#a0d99c"/>
<polygon points="416,565 423,566 425,580 417,580" fill="#a0d99c"/>
<polygon points="425,570 440,565 455,556 465,560 471,595 455,602 440,596 430,585" fill="#a0d99c"/>
<polygon points="494,590 505,584 512,586 512,640 498,635" fill="#a0d99c"/>
<polygon points="375,610 388,607 400,615 395,622 380,620" fill="#a0d99c"/>
<polygon points="399,628 410,622 425,630 446,640 440,651 420,648 405,640" fill="#a0d99c"/>
<polygon points="451,645 462,638 471,655 460,662" fill="#a0d99c"/>
<polygon points="480,665 490,661 496,672 483,674" fill="#a0d99c"/>
<polygon points="279,632 295,627 307,640 298,645 285,640" fill="#a0d99c"/>
<polygon points="266,650 278,642 284,650 272,661" fill="#a0d99c"/>
<polygon points="409,702 418,699 420,714 412,712" fill="#a0d99c"/>
<polygon points="420,740 430,725 440,722 445,713 450,722 470,730 485,738 495,745 490,752 470,750 455,745 440,752 425,756" fill="#a0d99c"/>
<polygon points="256,780 290,790 330,800 339,819 256,819" fill="#a0d99c"/>
<polygon points="266,653 275,651 284,652 280,660 268,661" fill="#a0d99c"/>
<polygon points="309,670 315,662 322,664 330,661 328,672 322,680 325,690 322,699 318,695 318,680 312,678" fill="#a0d99c"/>
<polygon points="328,695 333,697 345,693 348,700 338,703 330,701" fill="#a0d99c"/>
<polygon points="366,651 376,651 377,665 376,676 370,672 368,660" fill="#a0d99c"/>
<polygon points="353,674 362,676 368,683 380,678 382,681 372,690 358,689" fill="#a0d99c"/>
<polygon points="376,690 382,688 386,694 384,704 378,700" fill="#a0d99c"/>
<polygon points="256,678 265,680 272,682 274,692 266,698 258,697" fill="#a0d99c"/>
<polygon points="256,715 267,718 266,732 256,730" fill="#a0d99c"/>
<polygon points="279,716 285,722 300,727 313,723 312,730 295,731 282,724" fill="#a0d99c"/>
<polygon points="301,733 312,722 318,705 325,712 330,715 328,730 323,740 320,748 310,745 305,742" fill="#a0d99c"/>
<polygon points="324,744 335,741 347,748 345,763 328,762" fill="#a0d99c"/>
<polygon points="337,750 350,748 364,752 363,763 345,763" fill="#a0d99c"/>
<polygon points="372,727 382,723 388,727 386,740 378,747 372,742" fill="#a0d99c"/>
<polygon points="311,748 316,749 318,755 312,754" fill="#a0d99c"/>
<polygon points="343,766 353,767 350,777 343,776" fill="#a0d99c"/>
<polygon points="359,767 372,768 387,780 380,784 365,782 360,775" fill="#a0d99c"/>
<polygon points="396,744 400,744 400,753 396,752" fill="#a0d99c"/>
<polygon points="539,546 552,546 559,590 550,592" fill="#a0d99c"/>
<polygon points="570,550 583,549 582,562 572,561" fill="#a0d99c"/>
<polygon points="643,550 660,549 669,558 650,561" fill="#a0d99c"/>
<polygon points="671,560 685,556 694,565 680,571" fill="#a0d99c"/>
<polygon points="654,575 665,569 671,585 665,627 656,625" fill="#a0d99c"/>
<polygon points="717,660 730,655 745,668 762,675 760,698 740,694 722,680" fill="#a0d99c"/>
<polygon points="579,652 593,650 593,662 580,662" fill="#a0d99c"/>
<polygon points="602,652 613,651 613,662 603,662" fill="#a0d99c"/>
<polygon points="580,705 588,685 594,688 587,712" fill="#a0d99c"/>
<polygon points="630,743 645,741 644,753 632,753" fill="#a0d99c"/>
<polygon points="614,762 630,756 638,765 625,773" fill="#a0d99c"/>
<polygon points="702,750 715,747 729,755 720,763 705,758" fill="#a0d99c"/>
<polygon points="512,770 540,766 570,770 565,786 520,786" fill="#a0d99c"/>
<polygon points="512,548 525,546 527,565 515,562" fill="#a0d99c"/>
<polygon points="554,612 563,612 563,619 555,619" fill="#a0d99c"/>
<polygon points="512,628 520,627 520,638 512,638" fill="#a0d99c"/>
<polygon points="533,657 542,658 542,665 534,665" fill="#a0d99c"/>
<polygon points="595,620 605,612 613,620 603,636" fill="#a0d99c"/>
<polygon points="699,630 710,628 712,641 702,640" fill="#a0d99c"/>
<polygon points="684,656 690,656 690,664 684,664" fill="#a0d99c"/>
<polygon points="576,735 585,734 586,747 578,746" fill="#a0d99c"/>
<polygon points="702,770 725,768 730,780 705,780" fill="#a0d99c"/>
<polygon points="764,772 768,771 768,785 765,784" fill="#a0d99c"/>
<polygon points="600,790 640,792 650,819 600,819" fill="#a0d99c"/>
<polygon points="735,575 740,575 745,590 736,593" fill="#a0d99c"/>
<polygon points="412,141 426,141 426,158 412,158" fill="#f2efe9"/>
<polygon points="409,160 437,158 438,172 410,175" fill="#f2efe9"/>
<polygon points="384,163 394,163 394,179 384,179" fill="#f2efe9"/>
<polygon points="465,155 491,155 491,167 465,167" fill="#f2efe9"/>
<polygon points="384,137 397,137 397,147 384,147" fill="#f2efe9"/>
<polygon points="384,213 397,213 397,240 384,240" fill="#f2efe9"/>
<polygon points="384,248 414,248 414,273 384,273" fill="#f2efe9"/>
<polygon points="443,235 456,235 456,253 443,253" fill="#f2efe9"/>
<polygon points="485,254 502,254 502,273 485,273" fill="#f2efe9"/>
<polygon points="463,220 468,220 468,230 463,230" fill="#f2efe9"/>
<polygon points="475,175 486,180 482,195 476,190" fill="#f2efe9"/>
<polygon points="555,176 570,170 590,165 605,160 612,162 605,175 590,183 570,186 560,183" fill="#f2efe9"/>
<polygon points="612,137 640,137 640,150 630,160 618,158 612,150" fill="#f2efe9"/>
<polygon points="569,190 590,190 590,205 569,205" fill="#f2efe9"/>
<polygon points="606,192 625,192 625,208 606,208" fill="#f2efe9"/>
<polygon points="580,225 595,218 610,222 612,232 595,238 582,236" fill="#f2efe9"/>
<polygon points="512,205 522,205 522,214 512,214" fill="#f2efe9"/>
<polygon points="532,213 541,213 541,224 532,224" fill="#f2efe9"/>
<polygon points="552,230 559,230 559,240 552,240" fill="#f2efe9"/>
<polygon points="512,171 525,171 525,184 512,184" fill="#f2efe9"/>
<polygon points="555,205 565,205 565,218 555,218" fill="#f2efe9"/>
<polygon points="337,84 347,82 347,92 368,87 375,98 375,113 347,121 342,110" fill="#9bd3b5"/>
<polygon points="284,0 307,0 305,12 298,19 287,16" fill="#9bd3b5"/>
<polygon points="256,146 266,141 275,140 280,137 285,140 287,165 270,165 258,163" fill="#9bd3b5"/>
<polygon points="290,162 305,159 307,168 315,168 315,200 290,202 281,192 285,180" fill="#9bd3b5"/>
<polygon points="531,110 545,97 560,93 562,115 569,123 560,128 545,131 533,130" fill="#9bd3b5"/>
<polygon points="701,34 730,34 768,29 768,126 740,120 725,124 712,114 690,106 678,104 688,76 697,53" fill="#9bd3b5"/>
<polygon points="666,23 673,23 673,34 666,34" fill="#9bd3b5"/>
<polygon points="517,196 538,196 538,211 517,211" fill="#9bd3b5"/>
<polygon points="655,178 690,176 690,198 660,200" fill="#9bd3b5"/>
<polygon points="690,188 720,185 740,175 745,168 768,170 768,202 750,200 740,205 730,200 720,197 700,198" fill="#9bd3b5"/>
<polygon points="690,197 697,197 703,244 696,244" fill="#9bd3b5"/>
<polygon points="689,244 695,244 695,273 689,273" fill="#9bd3b5"/>
<polygon points="756,260 768,260 768,273 756,273" fill="#9bd3b5"/>
<polygon points="707,219 727,219 727,226 707,226" fill="#9bd3b5"/>
<polygon points="640,86 648,86 648,96 640,96" fill="#9bd3b5"/>
<polygon points="196,415 230,409 236,445 215,450 200,440" fill="#9bd3b5"/>
<polygon points="266,315 275,310 292,305 305,320 310,340 290,350 275,354 268,340" fill="#9bd3b5"/>
<polygon points="385,370 423,356 423,399 400,396 387,390" fill="#9bd3b5"/>
<polygon points="433,472 470,468 481,480 481,508 435,505" fill="#9bd3b5"/>
<polygon points="542,300 555,290 578,290 590,300 595,320 585,335 570,345 560,340 550,330 545,315" fill="#9bd3b5"/>
<polygon points="636,293 650,292 654,306 638,306" fill="#9bd3b5"/>
<polygon points="699,345 705,340 720,355 740,362 768,372 768,385 740,378 715,370 700,362" fill="#9bd3b5"/>
<polygon points="686,385 709,382 700,432 682,428" fill="#9bd3b5"/>
<polygon points="621,621 651,621 645,660 651,672 625,672 618,660" fill="#9bd3b5"/>
<polygon points="729,563 758,561 754,593 730,593" fill="#9bd3b5"/>
<polygon points="499,374 512,372 512,394 500,394" fill="#9bd3b5"/>
<polygon points="736,754 750,754 748,771 738,771" fill="#c8dcd8"/>
<polygon points="384,72 392,69 399,62 416,57 428,53 437,49 445,55 455,60 463,58 470,63 468,69 455,70 447,66 437,57 431,57 416,61 399,66 392,76 384,76" fill="#aad3df"/>
<polygon points="370,61 377,66 384,72 384,79 376,76 368,68" fill="#aad3df"/>
<polygon points="451,23 463,25 463,37 452,36" fill="#aad3df"/>
<polygon points="309,213 320,211 327,215 318,221 310,220" fill="#aad3df"/>
<polygon points="29,10 39,9 38,20 34,28 29,22" fill="#aad3df"/>
<polygon points="678,105 693,94 722,78 748,68 760,61 768,53 768,96 750,96 722,106 703,101 684,105" fill="#aad3df"/>
<polygon points="521,18 532,18 532,25 521,25" fill="#aad3df"/>
<path d="M19,819 L31,808 L54,806 L71,794 L77,779 L82,770 L101,764 L113,757 L121,743 L128,731 L141,720 L153,717 L166,723 L181,741 L182,754 L180,769 L185,780 L199,789 L211,791 L229,786 L256,779 L271,781 L294,796 L322,819" fill="none" stroke="#aad3df" stroke-width="4.6" stroke-linejoin="round" stroke-linecap="round"/>
<path d="M0,546 L11,552 L13,557 L8,571 L0,576" fill="none" stroke="#a0d99c" stroke-width="4" stroke-linejoin="round" opacity="0.8"/>
<path d="M0,602 L6,593 L6,583 L13,578 L24,576 L28,583 L29,594 L34,606 L38,599 L38,589 L48,586 L57,588 L65,598 L63,609 L58,618 L51,616 L47,612 L39,616 L38,627 L43,636 L51,637 L56,632 L57,628 L66,630 L76,635 L77,642 L69,653 L61,650 L53,645 L36,640 L25,640 L23,647 L25,658 L33,663 L53,667 L57,659 L66,653 L79,651 L84,658 L82,665 L76,672 L63,670 L56,667" fill="none" stroke="#a0d99c" stroke-width="4" stroke-linejoin="round" opacity="0.8"/>
<path d="M41,674 L38,683 L37,694 L38,698 L50,691 L53,696 L64,694 L67,701 L65,712 L71,720 L86,717 L96,703 L111,702 L115,708 L110,721 L107,730 L101,735 L99,738 L103,751 L108,753 L116,746 L117,740 L128,730" fill="none" stroke="#a0d99c" stroke-width="4" stroke-linejoin="round" opacity="0.8"/>
<path d="M19,686 L24,684 L30,686" fill="none" stroke="#a0d99c" stroke-width="4" stroke-linejoin="round" opacity="0.8"/>
<path d="M256,660 L262,664 L261,670 L256,676 L264,680 L267,689 L270,695 L275,694 L280,699 L289,698 L294,703 L291,709 L282,716 L280,720 L294,727 L309,725 L313,721 L318,727 L315,734 L313,737 L320,738 L326,745 L337,739 L339,732 L339,723 L334,720 L337,711 L343,706 L354,713 L360,727 L358,739 L353,745 L344,748 L337,750 L338,755 L348,759 L357,757 L366,739 L374,733 L383,738 L383,744 L376,752 L373,764 L373,777 L381,783 L394,778" fill="none" stroke="#a0d99c" stroke-width="4" stroke-linejoin="round" opacity="0.8"/>
<path d="M304,10 L298,23 L295,30 L288,33 L287,41 L294,44 L311,43 L321,38 L330,39 L337,44 L345,51 L351,56 L365,55 L368,63 L377,71" fill="none" stroke="#a0d99c" stroke-width="4" stroke-linejoin="round" opacity="0.8"/>
<path d="M470,66 L480,76 L488,79 L501,69 L507,62" fill="none" stroke="#a0d99c" stroke-width="4" stroke-linejoin="round" opacity="0.8"/>
<path d="M270,190 L282,200 L290,203" fill="none" stroke="#a0d99c" stroke-width="4" stroke-linejoin="round" opacity="0.8"/>
<path d="M387,819 L420,810 L460,812 L500,819" fill="none" stroke="#a0d99c" stroke-width="4" stroke-linejoin="round" opacity="0.8"/>
<path d="M0,546 L11,552 L13,557 L8,571 L0,576" fill="none" stroke="#aad3df" stroke-width="1.8" stroke-linejoin="round"/>
<path d="M0,602 L6,593 L6,583 L13,578 L24,576 L28,583 L29,594 L34,606 L38,599 L38,589 L48,586 L57,588 L65,598 L63,609 L58,618 L51,616 L47,612 L39,616 L38,627 L43,636 L51,637 L56,632 L57,628 L66,630 L76,635 L77,642 L69,653 L61,650 L53,645 L36,640 L25,640 L23,647 L25,658 L33,663 L53,667 L57,659 L66,653 L79,651 L84,658 L82,665 L76,672 L63,670 L56,667" fill="none" stroke="#aad3df" stroke-width="1.8" stroke-linejoin="round"/>
<path d="M41,674 L38,683 L37,694 L38,698 L50,691 L53,696 L64,694 L67,701 L65,712 L71,720 L86,717 L96,703 L111,702 L115,708 L110,721 L107,730 L101,735 L99,738 L103,751 L108,753 L116,746 L117,740 L128,730" fill="none" stroke="#aad3df" stroke-width="1.8" stroke-linejoin="round"/>
<path d="M19,686 L24,684 L30,686" fill="none" stroke="#aad3df" stroke-width="1.8" stroke-linejoin="round"/>
<path d="M256,660 L262,664 L261,670 L256,676 L264,680 L267,689 L270,695 L275,694 L280,699 L289,698 L294,703 L291,709 L282,716 L280,720 L294,727 L309,725 L313,721 L318,727 L315,734 L313,737 L320,738 L326,745 L337,739 L339,732 L339,723 L334,720 L337,711 L343,706 L354,713 L360,727 L358,739 L353,745 L344,748 L337,750 L338,755 L348,759 L357,757 L366,739 L374,733 L383,738 L383,744 L376,752 L373,764 L373,777 L381,783 L394,778" fill="none" stroke="#aad3df" stroke-width="1.8" stroke-linejoin="round"/>
<path d="M304,10 L298,23 L295,30 L288,33 L287,41 L294,44 L311,43 L321,38 L330,39 L337,44 L345,51 L351,56 L365,55 L368,63 L377,71" fill="none" stroke="#aad3df" stroke-width="1.8" stroke-linejoin="round"/>
<path d="M470,66 L480,76 L488,79 L501,69 L507,62" fill="none" stroke="#aad3df" stroke-width="1.8" stroke-linejoin="round"/>
<path d="M270,190 L282,200 L290,203" fill="none" stroke="#aad3df" stroke-width="1.8" stroke-linejoin="round"/>
<path d="M387,819 L420,810 L460,812 L500,819" fill="none" stroke="#aad3df" stroke-width="1.8" stroke-linejoin="round"/>
<path d="M256,206 L384,190" fill="none" stroke="#d9d5cf" stroke-width="1"/>
<path d="M384,182 L462,140" fill="none" stroke="#d9d5cf" stroke-width="1"/>
<path d="M0,253 L25,227 L80,215 L256,206" fill="none" stroke="#d9d5cf" stroke-width="1"/>
<path d="M0,384 L256,510" fill="none" stroke="#d9d5cf" stroke-width="1"/>
<path d="M0,647 L256,718" fill="none" stroke="#d9d5cf" stroke-width="1"/>
<path d="M256,728 L403,773 L512,789" fill="none" stroke="#d9d5cf" stroke-width="1"/>
<path d="M595,677 L768,761" fill="none" stroke="#d9d5cf" stroke-width="1"/>
<path d="M535,652 L512,720" fill="none" stroke="#d9d5cf" stroke-width="1"/>
<path d="M256,510 L319,546" fill="none" stroke="#d9d5cf" stroke-width="1"/>
<path d="M640,274 L676,266 L679,259 M676,266 L682,283 L700,297 L729,304 L768,317 M660,270 L665,287 L672,293 L681,293 M682,283 L665,290 L658,304 L640,309 M658,304 L676,317 L682,339 M748,251 L719,339 M767,287 L748,351 L736,388 M714,532 L716,546 M281,0 L292,46 L300,74 L313,137 L337,238 L329,257 L332,273 L350,288 L355,318 L357,346 L403,546 M256,34 L285,48 M0,125 L256,66 L298,56 L384,34 L421,24 L512,3 M305,56 L307,60 L360,76 L384,93 L397,104 L453,91 L512,77 M453,91 L463,137 L471,166 M473,0 L488,1 L493,8 L512,37 M464,88 L464,77 L479,70 L496,70 L505,60 L512,57 M29,273 L188,235 L256,220 L334,200 L363,201 L384,187 L421,184 L438,177 L471,167 L485,161 L512,156 M8,562 L46,546 M0,674 L76,672 L85,663 L95,683 L98,691 L111,694 L128,711 M207,546 L202,590 L190,625 L181,632 L171,632 L155,683 L153,683 L151,696 L128,721 M202,590 L228,581 L236,582 L256,593 M0,741 L76,735 L101,736 L118,732 L128,716 M152,701 L178,731 L192,755 L211,771 L229,771 L245,775 L256,775 M214,772 L188,819 M512,4 L531,0 M554,0 L568,62 L573,63 L639,49 M512,57 L565,47 L640,27 M512,36 L520,53 L528,74 L540,86 L542,96 L572,88 L600,109 L640,122 M512,77 L528,74 M635,29 L639,66 L617,82 L619,110 M600,109 L583,137 M640,28 L674,15 L674,4 L681,0 M643,0 L649,23 M705,0 L706,16 L701,42 L688,76 L677,96 L677,109 M706,18 L739,8 L744,0 M640,112 L681,108 L701,107 L712,117 L716,137 M658,76 L687,76 M658,76 L659,84 L640,112 M763,0 L768,10 M512,156 L589,137 M628,137 L604,168 L600,176 L603,181 L590,201 L572,215 L570,220 L577,223 L567,244 L566,255 L560,273 M580,211 L640,199 M572,233 L585,221 L640,200 M567,254 L593,262 L603,254 L620,249 M596,262 L599,273 M655,137 L678,150 L768,145 M678,150 L669,171 L656,192 L640,199 M669,171 L705,165 L719,170 L727,147 M716,137 L718,146 M688,203 L697,244 M688,197 L728,197 L734,208 L747,200 L768,204 M762,204 L741,273 M679,255 L690,244 L753,245 L768,250 M640,269 L678,262 M100,0 L124,95 M38,117 L73,273 M0,201 L52,188 M174,0 L256,37 M73,273 L87,322 L104,396 M0,407 L33,379 L56,365 L92,353 M0,281 L38,273 M45,409 L104,396 L188,375 L256,360 L512,303 M172,306 L188,375 M179,379 L207,470 M0,455 L45,409 M45,546 L104,507 L169,485 L256,445 L420,397 L512,377 M154,493 L210,523 L207,546 M420,397 L512,318 M440,320 L494,546 M387,483 L512,451 M468,311 L486,349 L483,380 M408,546 L512,526 M512,374 L699,337 L768,356 M699,337 L638,546 M512,452 L676,412 M527,301 L585,546 M603,273 L631,422 M594,432 L613,510 L620,546 M512,526 L653,493 M623,503 L653,526 L768,546 M689,384 L768,407 M676,430 L768,457 M732,394 L765,293 M512,301 L557,281 L638,273 M256,592 L512,720 M403,546 L410,586 L446,604 L512,637 M457,612 L405,773 L398,819 M463,614 L512,604 M494,546 L512,627 M256,776 L274,776 L307,789 L347,809 L360,819 M512,603 L626,574 L636,546 M584,546 L606,640 M628,570 L594,677 M512,638 L594,677 M628,569 L704,591 L768,613 M616,614 L712,643 M752,546 L732,581 L659,819 M648,546 L699,561 L704,591" fill="none" stroke="#c2beb8" stroke-width="3.4" stroke-linejoin="round"/>
<path d="M640,274 L676,266 L679,259 M676,266 L682,283 L700,297 L729,304 L768,317 M660,270 L665,287 L672,293 L681,293 M682,283 L665,290 L658,304 L640,309 M658,304 L676,317 L682,339 M748,251 L719,339 M767,287 L748,351 L736,388 M714,532 L716,546 M281,0 L292,46 L300,74 L313,137 L337,238 L329,257 L332,273 L350,288 L355,318 L357,346 L403,546 M256,34 L285,48 M0,125 L256,66 L298,56 L384,34 L421,24 L512,3 M305,56 L307,60 L360,76 L384,93 L397,104 L453,91 L512,77 M453,91 L463,137 L471,166 M473,0 L488,1 L493,8 L512,37 M464,88 L464,77 L479,70 L496,70 L505,60 L512,57 M29,273 L188,235 L256,220 L334,200 L363,201 L384,187 L421,184 L438,177 L471,167 L485,161 L512,156 M8,562 L46,546 M0,674 L76,672 L85,663 L95,683 L98,691 L111,694 L128,711 M207,546 L202,590 L190,625 L181,632 L171,632 L155,683 L153,683 L151,696 L128,721 M202,590 L228,581 L236,582 L256,593 M0,741 L76,735 L101,736 L118,732 L128,716 M152,701 L178,731 L192,755 L211,771 L229,771 L245,775 L256,775 M214,772 L188,819 M512,4 L531,0 M554,0 L568,62 L573,63 L639,49 M512,57 L565,47 L640,27 M512,36 L520,53 L528,74 L540,86 L542,96 L572,88 L600,109 L640,122 M512,77 L528,74 M635,29 L639,66 L617,82 L619,110 M600,109 L583,137 M640,28 L674,15 L674,4 L681,0 M643,0 L649,23 M705,0 L706,16 L701,42 L688,76 L677,96 L677,109 M706,18 L739,8 L744,0 M640,112 L681,108 L701,107 L712,117 L716,137 M658,76 L687,76 M658,76 L659,84 L640,112 M763,0 L768,10 M512,156 L589,137 M628,137 L604,168 L600,176 L603,181 L590,201 L572,215 L570,220 L577,223 L567,244 L566,255 L560,273 M580,211 L640,199 M572,233 L585,221 L640,200 M567,254 L593,262 L603,254 L620,249 M596,262 L599,273 M655,137 L678,150 L768,145 M678,150 L669,171 L656,192 L640,199 M669,171 L705,165 L719,170 L727,147 M716,137 L718,146 M688,203 L697,244 M688,197 L728,197 L734,208 L747,200 L768,204 M762,204 L741,273 M679,255 L690,244 L753,245 L768,250 M640,269 L678,262 M100,0 L124,95 M38,117 L73,273 M0,201 L52,188 M174,0 L256,37 M73,273 L87,322 L104,396 M0,407 L33,379 L56,365 L92,353 M0,281 L38,273 M45,409 L104,396 L188,375 L256,360 L512,303 M172,306 L188,375 M179,379 L207,470 M0,455 L45,409 M45,546 L104,507 L169,485 L256,445 L420,397 L512,377 M154,493 L210,523 L207,546 M420,397 L512,318 M440,320 L494,546 M387,483 L512,451 M468,311 L486,349 L483,380 M408,546 L512,526 M512,374 L699,337 L768,356 M699,337 L638,546 M512,452 L676,412 M527,301 L585,546 M603,273 L631,422 M594,432 L613,510 L620,546 M512,526 L653,493 M623,503 L653,526 L768,546 M689,384 L768,407 M676,430 L768,457 M732,394 L765,293 M512,301 L557,281 L638,273 M256,592 L512,720 M403,546 L410,586 L446,604 L512,637 M457,612 L405,773 L398,819 M463,614 L512,604 M494,546 L512,627 M256,776 L274,776 L307,789 L347,809 L360,819 M512,603 L626,574 L636,546 M584,546 L606,640 M628,570 L594,677 M512,638 L594,677 M628,569 L704,591 L768,613 M616,614 L712,643 M752,546 L732,581 L659,819 M648,546 L699,561 L704,591" fill="none" stroke="#ffffff" stroke-width="1.6" stroke-linejoin="round"/>
<path d="M0,490 L73,466 L150,440 L231,402 L256,406 L294,400 L347,379 Q440,340 512,360 L536,358 L560,351 L576,339 L592,321 L608,297 L620,273 L632,251 L639,241 L642,225 L644,213 L650,206 L664,199 L678,194 L723,185 L736,175 L742,165 L768,150" fill="none" stroke="#e8a93a" stroke-width="4.2" stroke-linejoin="round" stroke-linecap="round"/>
<path d="M0,490 L73,466 L150,440 L231,402 L256,406 L294,400 L347,379 Q440,340 512,360 L536,358 L560,351 L576,339 L592,321 L608,297 L620,273 L632,251 L639,241 L642,225 L644,213 L650,206 L664,199 L678,194 L723,185 L736,175 L742,165 L768,150" fill="none" stroke="#f4bd4c" stroke-width="2.8" stroke-linejoin="round" stroke-linecap="round"/>
<path d="M651,251 L679,257 L739,270 L768,276" fill="none" stroke="#e8a93a" stroke-width="4.2" stroke-linejoin="round" stroke-linecap="round"/>
<path d="M651,251 L679,257 L739,270 L768,276" fill="none" stroke="#f4bd4c" stroke-width="2.8" stroke-linejoin="round" stroke-linecap="round"/>
<path d="M588,357 L596,389 L596,410 L594,433" fill="none" stroke="#e8a93a" stroke-width="4.2" stroke-linejoin="round" stroke-linecap="round"/>
<path d="M588,357 L596,389 L596,410 L594,433" fill="none" stroke="#f4bd4c" stroke-width="2.8" stroke-linejoin="round" stroke-linecap="round"/>
<rect x="178.5" y="228" width="19.0" height="14" rx="7" fill="#fff" stroke="#9a9a9a" stroke-width="1.3"/>
<text x="188" y="238.8" font-family="Liberation Sans" font-size="10" fill="#666" text-anchor="middle">99</text>
<rect x="284.2" y="46" width="13.5" height="14" rx="7" fill="#fff" stroke="#9a9a9a" stroke-width="1.3"/>
<text x="291" y="56.8" font-family="Liberation Sans" font-size="10" fill="#666" text-anchor="middle">8</text>
<rect x="290.5" y="74" width="19.0" height="14" rx="7" fill="#fff" stroke="#9a9a9a" stroke-width="1.3"/>
<text x="300" y="84.8" font-family="Liberation Sans" font-size="10" fill="#666" text-anchor="middle">52</text>
<rect x="420.2" y="16" width="13.5" height="14" rx="7" fill="#fff" stroke="#9a9a9a" stroke-width="1.3"/>
<text x="427" y="26.8" font-family="Liberation Sans" font-size="10" fill="#666" text-anchor="middle">5</text>
<rect x="419.5" y="175" width="19.0" height="14" rx="7" fill="#fff" stroke="#9a9a9a" stroke-width="1.3"/>
<text x="429" y="185.8" font-family="Liberation Sans" font-size="10" fill="#666" text-anchor="middle">99</text>
<rect x="169.2" y="478" width="13.5" height="14" rx="7" fill="#fff" stroke="#9a9a9a" stroke-width="1.3"/>
<text x="176" y="488.8" font-family="Liberation Sans" font-size="10" fill="#666" text-anchor="middle">2</text>
<rect x="132.5" y="693" width="19.0" height="14" rx="7" fill="#fff" stroke="#9a9a9a" stroke-width="1.3"/>
<text x="142" y="703.8" font-family="Liberation Sans" font-size="10" fill="#666" text-anchor="middle">54</text>
<rect x="394.5" y="769" width="19.0" height="14" rx="7" fill="#fff" stroke="#9a9a9a" stroke-width="1.3"/>
<text x="404" y="779.8" font-family="Liberation Sans" font-size="10" fill="#666" text-anchor="middle">22</text>
<rect x="429.5" y="594" width="19.0" height="14" rx="7" fill="#fff" stroke="#9a9a9a" stroke-width="1.3"/>
<text x="439" y="604.8" font-family="Liberation Sans" font-size="10" fill="#666" text-anchor="middle">52</text>
<rect x="340.5" y="802" width="19.0" height="14" rx="7" fill="#fff" stroke="#9a9a9a" stroke-width="1.3"/>
<text x="350" y="812.8" font-family="Liberation Sans" font-size="10" fill="#666" text-anchor="middle">54</text>
<rect x="657.5" y="573" width="19.0" height="14" rx="7" fill="#fff" stroke="#9a9a9a" stroke-width="1.3"/>
<text x="667" y="583.8" font-family="Liberation Sans" font-size="10" fill="#666" text-anchor="middle">65</text>
<rect x="585.2" y="372" width="13.5" height="14" rx="7" fill="#fff" stroke="#9a9a9a" stroke-width="1.3"/>
<text x="592" y="382.8" font-family="Liberation Sans" font-size="10" fill="#666" text-anchor="middle">6</text>
<rect x="344.5" y="311" width="19.0" height="14" rx="7" fill="#fff" stroke="#9a9a9a" stroke-width="1.3"/>
<text x="354" y="321.8" font-family="Liberation Sans" font-size="10" fill="#666" text-anchor="middle">52</text>
<rect x="606.2" y="505" width="13.5" height="14" rx="7" fill="#fff" stroke="#9a9a9a" stroke-width="1.3"/>
<text x="613" y="515.8" font-family="Liberation Sans" font-size="10" fill="#666" text-anchor="middle">6</text>
<rect x="614.8" y="256" width="24.5" height="14" rx="7" fill="#fff" stroke="#9a9a9a" stroke-width="1.3"/>
<text x="627" y="266.8" font-family="Liberation Sans" font-size="10" fill="#666" text-anchor="middle">403</text>
<rect x="628.2" y="806" width="13.5" height="14" rx="7" fill="#fff" stroke="#9a9a9a" stroke-width="1.3"/>
<text x="635" y="816.8" font-family="Liberation Sans" font-size="10" fill="#666" text-anchor="middle">6</text>
<rect x="-4.8" y="558" width="13.5" height="14" rx="7" fill="#fff" stroke="#9a9a9a" stroke-width="1.3"/>
<text x="2" y="568.8" font-family="Liberation Sans" font-size="10" fill="#666" text-anchor="middle">2</text>
<text x="537" y="281" transform="rotate(0 537 281)" font-family="Liberation Sans" font-size="9.5" fill="#999" stroke="#f2efe9" stroke-width="2.5" paint-order="stroke">ANCASTER</text>
<text x="606" y="117" transform="rotate(0 606 117)" font-family="Liberation Sans" font-size="10" fill="#888" stroke="#f2efe9" stroke-width="2.5" paint-order="stroke">DUNDAS</text>
<path id="lb1" d="M73,466 L231,402" fill="none"/>
<text font-family="Liberation Sans" font-size="12.5" fill="#8a8580" stroke="#f2efe9" stroke-width="2.6" paint-order="stroke" dominant-baseline="central"><textPath href="#lb1" textLength="170" lengthAdjust="spacing">Alexander Graham Bell Parkway</textPath></text>
<path id="lb2" d="M347,379 Q440,340 512,360" fill="none"/>
<text font-family="Liberation Sans" font-size="12.5" fill="#8a8580" stroke="#f2efe9" stroke-width="2.6" paint-order="stroke" dominant-baseline="central"><textPath href="#lb2" textLength="168" lengthAdjust="spacing">Alexander Graham Bell Parkway</textPath></text>
<path id="lb3" d="M681,258 L790,290" fill="none"/>
<text font-family="Liberation Sans" font-size="12.5" fill="#8a8580" stroke="#f2efe9" stroke-width="2.6" paint-order="stroke" dominant-baseline="central"><textPath href="#lb3">Lincoln M. Alexander</textPath></text>
<path id="lb4" d="M741,167 L800,134" fill="none"/>
<text font-family="Liberation Sans" font-size="12.5" fill="#8a8580" stroke="#f2efe9" stroke-width="2.6" paint-order="stroke" dominant-baseline="central"><textPath href="#lb4">Alexander</textPath></text>
<text x="715" y="481" font-family="Liberation Sans" font-size="11" fill="#4a6fd8"><tspan x="715" dy="0">John C. Munro</tspan><tspan x="715" dy="12">Hamilton</tspan><tspan x="715" dy="12">International</tspan><tspan x="715" dy="12">Airport</tspan></text>
<rect x="694" y="487" width="18" height="17" rx="3" fill="#dbe4f7" stroke="#4a6fd8" stroke-width="1"/>
<path d="M703 489.5 Q704.2 489.5 704.2 491.5 V494.5 L709.5 497.5 V499 L704.2 497.5 V500.5 L706 502 V503 L703 502.2 L700 503 V502 L701.8 500.5 V497.5 L696.5 499 V497.5 L701.8 494.5 V491.5 Q701.8 489.5 703 489.5 Z" fill="#4a6fd8"/>
<circle cx="383.6" cy="409.5" r="36" fill="rgba(59,130,246,0.2)" stroke="#5b93ee" stroke-width="1.8"/>
<rect x="371.5" y="397.5" width="25" height="25" rx="4" fill="#3b82f6" stroke="#fff" stroke-width="2.2"/>
<rect x="381" y="404.5" width="6" height="11" fill="none" stroke="#fff" stroke-width="1.1"/>
<rect x="348" y="785" width="410" height="24" rx="12" fill="rgba(255,255,255,0.88)"/>
<text x="356" y="802" textLength="374" lengthAdjust="spacing" font-family="Liberation Sans" font-size="13" fill="#333">© OpenStreetMap | © OpenStreetMap <tspan font-weight="bold" fill="#111">contributors</tspan> | MapLibre</text>
<circle cx="746" cy="797" r="8" fill="#111"/><text x="746" y="801.5" font-family="Liberation Serif" font-weight="bold" font-size="12" fill="#fff" text-anchor="middle">i</text>
</svg></div>
<div class="b" style="left:1131px;top:1047px;width:768px;height:33px;background:#151515"></div>
<div class="t" style="left:1147.00px;top:1060.35px;font-size:14px;color:#bdbdbd;letter-spacing:-0.262px;">Trucks:</div>
<div class="t" style="left:1197.00px;top:1060.35px;font-size:14px;color:#f0f0f0;font-weight:bold;letter-spacing:0.769px;">0/3</div>
<div class="t" style="left:1234.60px;top:1060.35px;font-size:14px;color:#bdbdbd;letter-spacing:0.163px;">Moving:</div>
<div class="t" style="left:1290.00px;top:1060.35px;font-size:14px;color:#f0f0f0;font-weight:bold;">0</div>
<div class="t" style="left:1315.00px;top:1060.35px;font-size:14px;color:#bdbdbd;letter-spacing:0.134px;">Idle:</div>
<div class="t" style="left:1347.00px;top:1060.35px;font-size:14px;color:#f0f0f0;font-weight:bold;">0</div>
<div class="t" style="left:1372.00px;top:1060.35px;font-size:14px;color:#bdbdbd;letter-spacing:0.272px;">Offline:</div>
<div class="t" style="left:1423.00px;top:1060.35px;font-size:14px;color:#f0f0f0;font-weight:bold;">0</div>
<div class="t" style="left:1823.00px;top:1060.35px;font-size:14px;color:#bdbdbd;letter-spacing:-0.133px;">Loading...</div>
</body></html>
